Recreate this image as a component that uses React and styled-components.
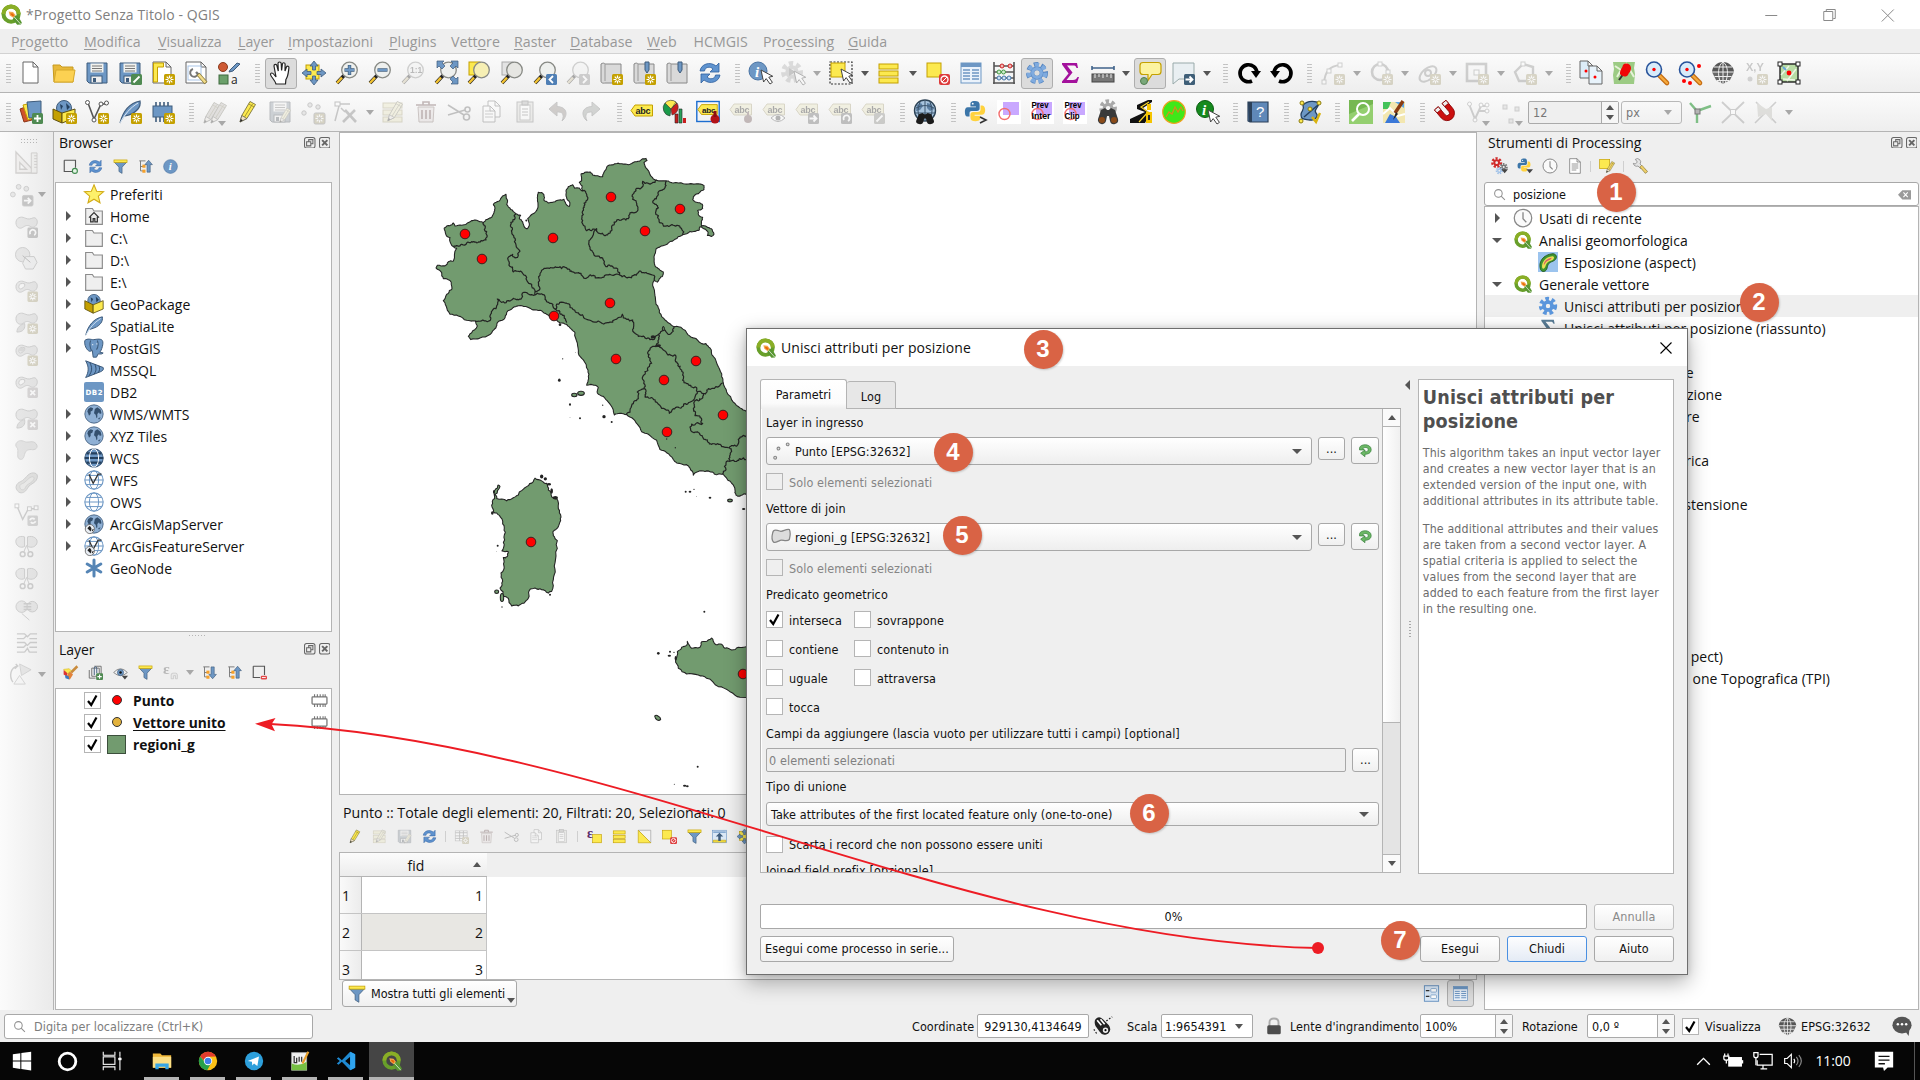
import React from 'react';
import styled, { createGlobalStyle, css } from 'styled-components';

const UI = '"Open Sans", "Noto Sans", sans-serif';
const TAHOMA = '"DejaVu Sans Condensed", "DejaVu Sans", sans-serif';
const LINE = '#b4b4b4';
const BG = '#efefef';

const Global = createGlobalStyle`
  * { box-sizing: border-box; }
  body { margin: 0; background: ${BG}; font-family: ${UI}; font-size: 14px; color: #111; }
`;

/* ---------- shared glyph parts ---------- */
const B = '#6d97c4';
const BD = '#3f5c7c';
const Y = '#fce94f';
const YD = '#c4a000';
const G = '#888a85';

const Star = ({ x = 13, y = 13 }) => (
  <g transform={`translate(${x} ${y})`}>
    <rect width="11" height="11" rx="1.5" fill={YD} />
    <path d="M5.5 1.5v8M1.5 5.5h8M2.7 2.7l5.6 5.6M8.3 2.7L2.7 8.3" stroke="#fff" strokeWidth="1.2" />
    <circle cx="5.5" cy="5.5" r="1.2" fill={YD} />
  </g>
);
const Sq = ({ c = '#5a8c5a', d, x = 13, y = 13 }) => (
  <g transform={`translate(${x} ${y})`}>
    <rect width="11" height="11" rx="1.5" fill={c} />
    <path d={d} stroke="#fff" strokeWidth="1.8" fill="none" />
  </g>
);
const Lens = ({ children, fill = '#eef0ee' }) => (
  <g>
    <path d="M9 14.500l-7 7.500" stroke="#222" strokeWidth="3.600" />
    <path d="M7 16.600l-5 5.400" stroke="#f2c231" strokeWidth="2.400" />
    <circle cx="14.5" cy="9" r="7.8" fill={fill} stroke={G} strokeWidth="1.3" />
    {children}
  </g>
);
const Cursor = ({ x = 10, y = 8 }) => (
  <path transform={`translate(${x} ${y})`} d="M1 1l2.6 12 2.6-3.4 3.8 5.4 2.4-1.6-3.6-5.2 4-.9z" fill="#fff" stroke="#444" strokeWidth="1" />
);
const Pencil = ({ c = Y }) => (
  <g>
    <path d="M4 22l1.800-6.500L14 1.500l5.500 3-8.600 14z" fill={c} stroke="#7a7440" strokeWidth=".9" />
    <path d="M4 22l1.800-6.500 5.100 3z" fill="#f1e2c4" stroke="#555" strokeWidth=".7" />
    <path d="M4 22l.8-3 2 1.300z" fill="#222" />
    <path d="M12.700 4l5.500 3M8.500 17L16.500 4" stroke="#9b8f2a" strokeWidth=".9" />
  </g>
);
const Tag = ({ stroke = YD }) => (
  <g>
    <path d="M1 9.500l4-5.500h17.500v11H5z" fill={Y} stroke={stroke} />
    <text x="5.500" y="12.800" fontSize="9" fontWeight="700" fill="#222" fontFamily="Liberation Sans, sans-serif" textLength="15">abc</text>
  </g>
);
const Globe = ({ fill = '#8fb0d4' }) => (
  <g>
    <circle cx="12" cy="12" r="11" fill={fill} stroke={BD} strokeWidth="1" />
    <path d="M4 9l1-3 3-2 3 1-1 3-2 1v3l-2 2-1-3zM13 6l3-2 4 3 1 4-2 1-1-2-2 2v4l-1 1-1-4-2-2zM17 17l3-1-2 3z" fill="#34506e" />
  </g>
);
const Blob = ({ inner }) => (
  <g>
    <path d="M1 8c0-5 5-7 9-5s6 1 9 0 5 3 4 6-4 5-7 3-5-1-8 1-7 0-7-5z" fill="#ccc" stroke="#888" />
    {inner && <path d="M4 8c0-3 3-4 6-3 1 2-1 4-3 5s-3 0-3-2z" fill="#f4f4f4" stroke="#888" />}
  </g>
);
const Py = () => (
  <g>
    <path d="M12 1c-5 0-5 2-5 4v2h6v1H4c-3 0-3 4-3 5s0 5 3 5h2v-4c0-2 2-2 3-2h5c2 0 3-1 3-3V5c0-3-2-4-5-4z" fill="#3b75a8" />
    <path d="M12.500 23c5 0 5-2 5-4v-2h-6v-1h8c3 0 3.500-3 3.500-5s-1-5-3-5h-2v4c0 2-1 3-3 3H10c-2 0-3 1-3 3v3c0 3 2 4 5.500 4z" fill="#ffd23e" />
    <circle cx="9.500" cy="4" r="1" fill="#fff" />
  </g>
);
const Refresh = () => (
  <g stroke="#2f5f9e" strokeWidth=".8" fill="#5f93cf">
    <path d="M2 10C3 3 12 0 18 5l3-3v9h-9l3-3C12 5 7 6 6.500 10z" />
    <path d="M22 14c-1 7-10 10-16 5l-3 3v-9h9l-3 3c3 3 8 2 8.500-2z" />
  </g>
);
const Funnel = () => (
  <g>
    <path d="M2 5h20l-7.500 8v10l-5-3v-7z" fill={B} stroke={BD} strokeWidth="1" />
    <rect x="1.500" y="1.500" width="21" height="4" fill={Y} stroke={YD} />
  </g>
);
const QLogo = () => (
  <g>
    <circle cx="11.500" cy="11.500" r="8.700" fill="none" stroke="#689f2a" strokeWidth="4.600" />
    <path d="M2.800 11.500a8.700 8.700 0 0 1 17.400 0" fill="none" stroke="#8aae26" strokeWidth="4.600" />
    <path d="M14.500 13.500l4.500-.5 4.800 8-1 2.500-4.300.3-4.800-6z" fill="#589632" />
    <path d="M13 12.500l9.500 10.500" stroke="#fff" strokeWidth=".8" />
    <path d="M8.800 8.600l5 .6 3 3.600-2.800 3-4-2.800z" fill="#f3a64c" />
    <path d="M10.500 10.500l3 .4 1.600 2-1.400 1.500-2.200-1.700z" fill="#e9690c" />
  </g>
);
const Sheet = ({ x = 4, y = 1, w = 15, h = 21, f = '#fff' }) => (
  <path transform={`translate(${x} ${y})`} d={`M0 0h${w - 5}l5 5v${h - 5}H0zM${w - 5} 0v5h5`} fill={f} stroke="#666" strokeWidth="1" />
);
const Cog = ({ c = B, r = 8.500, w = 4, teeth = '4.200 3.150' }) => (
  <g>
    <circle cx="12" cy="12" r={r} fill="none" stroke={c} strokeWidth={w + 1} strokeDasharray={teeth} />
    <circle cx="12" cy="12" r={r - 3.800} fill="none" stroke={c} strokeWidth={w} />
  </g>
);
const Tree = ({ up }) => (
  <g>
    <path d="M2 3h10M4 3v16M4 12h4M4 19h4" stroke="#777" fill="none" strokeWidth="1.500" />
    <rect x="7" y="9" width="5" height="5" fill="#f6a12b" />
    <rect x="7" y="17" width="5" height="5" fill="#f6a12b" />
    <path transform={up ? '' : 'translate(0 24) scale(1 -1)'} d="M17 2l6 7h-3.500v12h-5V9H11z" fill={B} stroke={BD} />
  </g>
);
const Disk = () => (
  <g>
    <path d="M2 2h20v20H4l-2-2z" fill={B} stroke={BD} />
    <rect x="5.500" y="2.500" width="13" height="9" fill="#f2f2ee" />
    <path d="M7 5h10M7 7.500h10M7 10h10" stroke="#777" strokeWidth="1" />
    <rect x="6" y="15" width="11" height="7" fill="#eee" stroke={BD} />
    <rect x="8" y="17" width="3" height="4" fill={BD} />
  </g>
);
const Ruled = () => (
  <g>
    <rect x="2" y="3" width="19" height="5" fill={Y} stroke={YD} />
    <rect x="2" y="10" width="19" height="5" fill={Y} stroke={YD} />
    <rect x="2" y="17" width="19" height="5" fill={Y} stroke={YD} />
  </g>
);
const RevSquare = ({ children }) => (
  <g>
    <rect width="24" height="24" fill="#fff" />
    <rect x="6" y="2" width="16" height="13" fill="#c9a8ff" />
    <circle cx="7.500" cy="14" r="5.500" fill="none" stroke="#f36f6f" strokeWidth="1.400" />
    {children}
  </g>
);
const Binoc = ({ c = '#1b1b1b', e = '#1b1b1b' }) => (
  <g fill={c}>
    <path d="M5 9l4-2 2 2h2l2-2 4 2 3 9a4 4 0 0 1-8 2l-1-5h-2l-1 5a4 4 0 0 1-8-2z" />
    <circle cx="6" cy="19" r="3" fill={e} />
    <circle cx="18" cy="19" r="3" fill={e} />
  </g>
);
const Grid = ({ land, dark }) => (
  <g>
    <circle cx="12" cy="12" r="11" fill={dark ? B : '#fff'} stroke={dark ? BD : B} strokeWidth="1.300" />
    <path d="M1 12h22M3 6.500h18M3 17.500h18" stroke={dark ? '#24405e' : B} strokeWidth={dark ? 2.6 : 1.2} />
    <ellipse cx="12" cy="12" rx="5.500" ry="11" fill="none" stroke={dark ? '#fff' : B} strokeWidth="1.200" />
    {land && <path d="M6 5l5 11 6-11h4" fill="none" stroke="#333" strokeWidth="1.500" />}
  </g>
);
const NetGlobe = () => (
  <g>
    <path d="M12 1C6 1 1 6 1 11h22C23 6 18 1 12 1z" fill="#555" />
    <path d="M1 11l4 8 7 4 7-4 4-8z" fill="#666" />
    <path d="M1 11h22M3 6h18M3.500 15.500h17M6 19.500h12M12 1v22M12 1C7 4 6 14 10 22.500M12 1c5 3 6 13 2 21.500" stroke="#eee" fill="none" strokeWidth="1" />
  </g>
);

const ICONS = {
  qgis: <QLogo />,
  newdoc: <Sheet />,
  open: <g><path d="M1 4h7l2 2h11v15H2z" fill="#e8b93a" stroke="#c79a1e" /><path d="M4 9h19l-2 12H2z" fill="#fcd152" stroke="#d6a92b" /></g>,
  save: <Disk />,
  saveas: <g><Disk /><Sq c="#4f8a52" d="M2.500 8.500l6-6" /></g>,
  newlayout: <g><Sheet x={2} y={1} w={18} h={21} /><path d="M2.500 2h10v4h-6v15h-4z" fill={Y} stroke={YD} /><Star /></g>,
  layouts: <g><Sheet x={2} y={1} w={20} h={21} /><rect x="4" y="5" width="13" height="14" fill="none" stroke="#a9c5e8" /><path d="M9 8a4 4 0 1 0 5 5" stroke="#777" strokeWidth="2" fill="none" /><path d="M12 11l3 3" stroke="#777" strokeWidth="2.400" /><path d="M14 13l8 9" stroke="#8a7a3a" strokeWidth="4" /><path d="M14.500 13.500l7 8" stroke="#f2dc8a" strokeWidth="2.600" /></g>,
  style: <g><circle cx="6" cy="6" r="4.500" fill="#ce5a34" stroke="#8a3a1e" /><path d="M13 9l7-7 3 1-7 7-4 1z" fill={B} stroke={BD} /><rect x="2" y="14" width="9" height="9" fill="#6ba06b" stroke="#3f6b3f" /><text x="14" y="22.500" fontSize="12" fontFamily="Open Sans, sans-serif" fill="#222">a</text></g>,
  hand: <path d="M7 23c-1-4-5-7-5.500-9.500 0-2 2-2 3.500 0l2 2.500-2-11c0-2 2.600-2.200 3 0L9.300 10 9 2.500c0-2 3-2 3.200 0l.4 7L13.400 3c.3-1.800 2.800-1.600 2.700.3L16 10l1.400-4c.8-1.600 3-.8 2.500 1-.6 4-.6 8-3 11.500L16.500 23z" fill="#fff" stroke="#222" strokeWidth="1.200" />,
  pansel: <g><rect x="4" y="4" width="13" height="14" fill={Y} stroke={YD} /><g fill={B} stroke={BD} strokeWidth=".8"><path d="M12 0l4 5h-2.500v4h-3V5H8z" /><path d="M12 24l4-5h-2.500v-4h-3v4H8z" /><path d="M0 12l5-4v2.500h4v3H5V16z" /><path d="M24 12l-5-4v2.500h-4v3h4V16z" /></g></g>,
  zoomin: <Lens><path d="M14.500 4v10M9.500 9h10" stroke={BD} strokeWidth="3.400" /><path d="M14.500 4.500v9M10 9h9" stroke={B} strokeWidth="2" /></Lens>,
  zoomout: <Lens><path d="M9.500 9h10" stroke={BD} strokeWidth="3.400" /><path d="M10 9h9" stroke={B} strokeWidth="2" /></Lens>,
  zoom11: <Lens><text x="9" y="12" fontSize="8.500" fontWeight="700" fill="#555" fontFamily="Liberation Sans, sans-serif">1:1</text></Lens>,
  zoomfull: <g><Lens /><g fill={B} stroke={BD} strokeWidth=".7"><path d="M3 0h7L8 2l3 3-3 3-3-3-2 2z" /><path d="M24 0h-7l2 2-3 3 3 3 3-3 2 2z" /><path d="M24 23h-7l2-2-3-3 3-3 3 3 2-2z" /></g></g>,
  zoomsel: <g><rect x="2" y="1" width="11" height="13" fill={Y} stroke={YD} /><Lens fill="#f6efb4" /></g>,
  zoomlayer: <g><rect x="2" y="1" width="11" height="13" fill="#e3e3e3" stroke="#aaa" /><Lens fill="#e6e6e2" /></g>,
  zoomlast: <g><Lens /><Sq c="#4f7fb5" d="M7 2L3.500 5.500 7 9" /></g>,
  zoomnext: <g><Lens /><Sq c="#888" d="M4 2l3.500 3.500L4 9" /></g>,
  book: <g><path d="M2 3c3-2 4 0 4 0h16v19H6s-4 1-4-2z" fill="#d9d9d9" stroke="#888" /><path d="M6 3v17" stroke="#999" /><path d="M13 1h4v8l-2 3-2-3z" fill={B} stroke={BD} /></g>,
  booknew: <g><path d="M2 3c3-2 4 0 4 0h16v19H6s-4 1-4-2z" fill="#d9d9d9" stroke="#888" /><path d="M6 3v17" stroke="#999" /><Star /></g>,
  bookadd: <g><path d="M2 3c3-2 4 0 4 0h16v19H6s-4 1-4-2z" fill="#d9d9d9" stroke="#888" /><path d="M6 3v17" stroke="#999" /><path d="M13 1h4v8l-2 3-2-3z" fill={B} stroke={BD} /><Star /></g>,
  refresh: <Refresh />,
  identify: <g><circle cx="10" cy="10" r="9" fill={B} stroke="#4a74a4" /><text x="7" y="15.500" fontSize="15" fontWeight="700" fontStyle="italic" fontFamily="Liberation Serif, serif" fill="#fff">i</text><Cursor x={12} y={8} /></g>,
  info: <g><circle cx="12" cy="12" r="11" fill={B} stroke="#4a74a4" /><text x="9" y="18" fontSize="17" fontStyle="italic" fontWeight="700" fontFamily="Liberation Serif, serif" fill="#fff">i</text></g>,
  action: <g><g transform="translate(-1 -1)"><Cog c="#aaa" /></g><path d="M8 7l7 4-7 4z" fill="#777" /><Cursor x={12} y={9} /></g>,
  select: <g><rect x="1" y="1" width="22" height="22" fill="none" stroke="#333" strokeWidth="1.200" strokeDasharray="2 1.500" /><rect x="2" y="2" width="14" height="14" fill={Y} stroke={YD} /><Cursor x={11} y={7} /></g>,
  rows: <Ruled />,
  deselect: <g><rect x="1" y="2" width="14" height="14" fill={Y} stroke={YD} /><rect x="13" y="13" width="11" height="11" rx="2" fill="#dd3b3b" /><circle cx="18.500" cy="18.500" r="3.500" fill="none" stroke="#fff" strokeWidth="1.300" /><path d="M16 21l5-5" stroke="#fff" /></g>,
  table: <g><rect x="2" y="2" width="20" height="20" fill="#eaf2fb" stroke={B} /><rect x="2" y="2" width="20" height="4" fill={B} /><path d="M4 9h7M4 12h7M4 15h7M4 18h7M13 9h7M13 12h7M13 15h7M13 18h7" stroke={B} strokeWidth="1.400" /></g>,
  abacus: <g><path d="M2 1v22M22 1v22M1 22h22M2 5h20M2 11h20M2 17h20" stroke="#555" strokeWidth="1.600" /><g strokeWidth="1"><g fill="#f4b6b6" stroke="#c22"><circle cx="10" cy="5" r="2" /><circle cx="18" cy="5" r="2" /></g><g fill="#cdeccd" stroke="#494"><circle cx="7" cy="11" r="2" /><circle cx="11.500" cy="11" r="2" /></g><g fill="#cfe0f4" stroke="#47a"><circle cx="7" cy="17" r="2" /><circle cx="12" cy="17" r="2" /><circle cx="17" cy="17" r="2" /></g></g></g>,
  cog: <g><Cog c="#5585c0" /><Cog c="#7fabdf" r={8.300} w={3} /></g>,
  cogb: <g><Cog c="#5b96dc" /><circle cx="12" cy="12" r="5" fill="none" stroke="#5b96dc" strokeWidth="4" /></g>,
  sigma: <path d="M4 2h15l1 5h-1.500c-.5-2-1.500-2.500-3.500-2.500H9l5.500 7L8.500 19H15c2.500 0 3.500-1 4.500-3H21l-2 6H4v-1.500l6.500-8L4 3.500z" fill="#a3119c" />,
  sigmablue: <path d="M4 2h15l1 5h-1.500c-.5-2-1.500-2.500-3.500-2.500H9l5.500 7L8.500 19H15c2.500 0 3.500-1 4.500-3H21l-2 6H4v-1.500l6.500-8L4 3.500z" fill="#5a7d96" />,
  ruler: <g><path d="M1 7h22M1 5v4M23 5v4" stroke="#40638a" strokeWidth="1.600" /><rect x="1" y="13" width="22" height="8" fill="#777" stroke="#444" /><path d="M4 13v4M8 13v3M12 13v4M16 13v3M20 13v4" stroke="#eee" /></g>,
  tips: <g><path d="M5 1.500h15q3 0 3 3v6q0 3-3 3h-6l-4 6v-6H5q-3 0-3-3v-6q0-3 3-3z" fill="#fcf3a0" stroke={YD} strokeWidth="1.200" /><circle cx="6" cy="20" r="3.500" fill="#7aa87a" stroke="#4f7d4f" /></g>,
  annot: <g><path d="M2 2h21v16H8l-6 5z" fill="#e9eff2" stroke="#9aa" /><Sq c="#3f5f78" d="M1.500 5.500h7M5.500 2.500l3 3-3 3" /></g>,
  cw: <g><path d="M15 20A8.500 8.500 0 1 1 20 12" fill="none" stroke="#000" strokeWidth="3.600" /><path d="M14 10h10l-5 7z" fill="#000" /></g>,
  ccw: <g><path d="M9 20A8.500 8.500 0 1 0 4 12" fill="none" stroke="#000" strokeWidth="3.600" /><path d="M10 10H0l5 7z" fill="#000" /></g>,
  arc: <g><path d="M3 22C4 10 9 5 19 4" fill="none" stroke={G} strokeWidth="2" /><g fill="#fff" stroke={G}><rect x="1" y="19" width="4" height="4" /><rect x="6" y="8" width="4" height="4" /><rect x="17" y="2" width="4" height="4" /></g><Star /></g>,
  circ: <g><circle cx="11" cy="11" r="8" fill="none" stroke={G} strokeWidth="2.600" /><g fill="#fff" stroke={G}><rect x="9" y="1" width="4" height="4" /><rect x="17" y="9" width="4" height="4" /></g><Star /></g>,
  ell: <g><ellipse cx="11" cy="13" rx="10" ry="5.500" transform="rotate(-40 11 13)" fill="none" stroke={G} strokeWidth="2" /><circle cx="11" cy="12" r="3" fill="none" stroke={G} strokeWidth="2" /><Star /></g>,
  rect: <g><rect x="2" y="3" width="19" height="17" fill="none" stroke={G} strokeWidth="2.600" /><rect x="9" y="9" width="5" height="5" fill="#fff" stroke={G} /><Star /></g>,
  poly: <g><path d="M2 11L10 3l10 3v9l-6 5H6z" fill="none" stroke={G} strokeWidth="2.400" /><rect x="8" y="1" width="4" height="4" fill="#fff" stroke={G} /><Star /></g>,
  copymap: <g><Sheet x={1} y={0} w={13} h={17} f="#dcecf8" /><Sheet x={10} y={5} w={13} h={18} f="#e8f3fb" /><circle cx="7" cy="10" r="1.500" fill="red" /><circle cx="16" cy="16" r="1.500" fill="red" /></g>,
  pinmap: <g><path d="M1 1h22l-1 6 1 6-1 10H2l-1-9 1-6z" fill="#9ccb84" /><path d="M3 5l6 4-4 7M14 2l8 14" stroke="#e6f2d8" strokeWidth="2" fill="none" /><path d="M12 12l-5 7" stroke="#333" strokeWidth="2" /><path d="M11 4c3-3 8-1 8 3s-2 4-3 7c-3 3-6 1-8-1 0-5 2-5 3-9z" fill="#f00606" /></g>,
  lensdot: <g><path d="M14 14l8 8" stroke="#c46a10" strokeWidth="4.600" strokeLinecap="round" /><path d="M14 14l8 8" stroke="#f5a93c" strokeWidth="2.400" strokeLinecap="round" /><circle cx="9" cy="8.500" r="7.500" fill="#d7ebfa" stroke="#27529a" strokeWidth="1.600" /><circle cx="9" cy="8.500" r="1.700" fill="red" /></g>,
  lensdots: <g><path d="M14 14l8 8" stroke="#c46a10" strokeWidth="4.600" strokeLinecap="round" /><path d="M14 14l8 8" stroke="#f5a93c" strokeWidth="2.400" strokeLinecap="round" /><circle cx="9" cy="8.500" r="7.500" fill="#d7ebfa" stroke="#27529a" strokeWidth="1.600" /><g fill="red"><circle cx="9" cy="8.500" r="1.700" /><circle cx="21" cy="5" r="2" /><circle cx="6" cy="20" r="2" /><circle cx="12" cy="22" r="2" /></g></g>,
  netglobe: <NetGlobe />,
  xy: <g><text x="2" y="10" fontSize="11" fontWeight="700" fontFamily="Liberation Sans, sans-serif" fill="#777">X,Y</text><circle cx="6" cy="18" r="2.500" fill="#999" /><Star /></g>,
  maparea: <g><rect x="3" y="3" width="18" height="18" fill="#b8dca4" stroke="#222" strokeWidth="1.400" /><path d="M4 14l8-9M10 20l9-12M6 18l12 1" stroke="#eef6e6" strokeWidth="1.500" /><path d="M6 6l3 3" stroke="#6aa6d8" strokeWidth="2" /><circle cx="12" cy="12" r="2.400" fill="red" /><g fill="#fff" stroke="#222"><rect x="1" y="1" width="4" height="4" /><rect x="19" y="1" width="4" height="4" /><rect x="1" y="19" width="4" height="4" /><rect x="19" y="19" width="4" height="4" /></g></g>,
  /* second toolbar */
  dsm: <g><path d="M1 9l8-3 4 14-8 2z" fill="#d0532b" stroke="#8c3417" /><path d="M4 5l9-2 4 14-8 3z" fill={Y} stroke={YD} /><path d="M8 2l14-1v16l-12 1z" fill={B} stroke={BD} /><Sq c="#4f8a52" d="M5.500 2v7M2 5.500h7" /></g>,
  gpkgnew: <g><circle cx="12" cy="8" r="7.500" fill={B} stroke={BD} /><path d="M8 4l3 2-2 4zM14 3l4 4-3 3z" fill="#24405e" /><path d="M1 9l9 4v10l-9-4z" fill={YD} stroke="#5e5010" /><path d="M10 13l13-4v9l-13 5z" fill={Y} stroke="#5e5010" /><Star x={14} y={13} /></g>,
  vnew: <g><path d="M3 3l6 16L16 4h6" fill="none" stroke="#555" strokeWidth="1.600" /><g fill="#fff" stroke="#555"><circle cx="2.500" cy="2.500" r="2" /><circle cx="9" cy="20" r="2" /><circle cx="16" cy="4" r="2" /><circle cx="21.500" cy="3" r="2" /></g><Star /></g>,
  feather: <g><path d="M2 23C5 11 12 3 22 1c1 5-2 12-15 15" fill={B} stroke={BD} strokeWidth="1.200" /><path d="M2 23C7 14 12 8 20 3" stroke="#dfeaf6" fill="none" /></g>,
  feathernew: <g><path d="M2 23C5 11 12 3 22 1c1 5-2 12-15 15" fill={B} stroke={BD} strokeWidth="1.200" /><path d="M2 23C7 14 12 8 20 3" stroke="#dfeaf6" fill="none" /><Star /></g>,
  chipnew: <g><path d="M5 2v20M9 2v20M13 2v20M17 2v20" stroke="#3f5c7c" strokeWidth="1.600" /><rect x="2" y="6" width="19" height="11" fill={B} stroke={BD} /><Star /></g>,
  pencils: <g><g transform="translate(-3 0)"><Pencil c="#c9b8a8" /></g><g transform="translate(4 0)"><Pencil c="#c9b8a8" /></g></g>,
  pencil: <g transform="translate(1 0)"><Pencil /></g>,
  savep: <g><Disk /><g transform="translate(9 7) scale(.7)"><Pencil /></g></g>,
  ptsnew: <g fill="#ccc" stroke="#777"><circle cx="3" cy="13" r="2.200" /><circle cx="9" cy="5" r="2.200" /><circle cx="17" cy="7" r="2.200" /><Star /></g>,
  vtools: <g><path d="M2 4h14M5 6L1 21M7 8l4 4" stroke="#777" strokeWidth="1.500" fill="none" /><rect x="1" y="2" width="5" height="4" fill="#fff" stroke="#666" /><path d="M11 10l11 12M21 10L9 22" stroke="#777" strokeWidth="2.600" /></g>,
  multi: <g><Ruled /><g transform="translate(3 0) scale(.95)"><Pencil /></g></g>,
  trash: <g><path d="M4 7h16l-1 15H5z" fill="#f0d4d4" stroke="#a65" /><path d="M2 5h20M9 5V2h6v3M8 10v9M12 10v9M16 10v9" stroke="#a33" strokeWidth="1.600" fill="none" /></g>,
  cut: <g stroke="#666" strokeWidth="1.600" fill="none"><path d="M1 5l16 10M1 15L18 10" /><circle cx="19.500" cy="17" r="3" /><circle cx="20.500" cy="9.500" r="2.500" /></g>,
  copy: <g><Sheet x={8} y={1} w={12} h={16} /><Sheet x={3} y={6} w={12} h={16} /><path d="M5 11h6M5 14h8M5 17h8" stroke="#888" /></g>,
  paste: <g><rect x="4" y="2" width="16" height="20" fill="#ddd9c8" stroke="#777" /><rect x="7" y="5" width="10" height="15" fill="#fff" stroke="#888" /><rect x="9" y="1" width="6" height="4" fill="#aaa" stroke="#666" /><path d="M9 9h6M9 12h6M9 15h6" stroke="#777" /></g>,
  undo: <path d="M11 2L3 9l8 7v-4c5-.5 8 2 5 9 6-5 6-14-5-14.500z" fill="#a4826e" stroke="#777" />,
  redo: <path d="M13 2l8 7-8 7v-4c-5-.5-8 2-5 9-6-5-6-14 5-14.500z" fill="#8a9e8a" stroke="#777" />,
  tag: <g transform="translate(0 1)"><Tag /></g>,
  diagram: <g><path d="M8 9V1a8 8 0 0 1 6 2z" fill={Y} stroke="#333" strokeWidth=".6" /><path d="M8 9L2 3a8 8 0 0 0 5 13z" fill="#1a9a49" stroke="#333" strokeWidth=".6" /><path d="M8 9l6-6a8 8 0 0 1-5 12z" fill="#c81e1e" stroke="#333" strokeWidth=".6" /><path d="M8 9L2 3a8 8 0 0 1 11-1z" fill={Y} stroke="#333" strokeWidth=".6" /><path d="M12 14h3v9h-3z" fill="#c81e1e" stroke="#222" strokeWidth=".6" /><path d="M16 9h3v14h-3z" fill="#2aa05a" stroke="#222" strokeWidth=".6" /><path d="M20 18h3v5h-3z" fill="#c81e1e" /></g>,
  tagpin: <g><rect x=".8" y="1.500" width="22.400" height="20" fill="none" stroke="#1c6dd0" strokeWidth="1.400" /><g transform="translate(1 1) scale(.9)"><Tag /></g><circle cx="19" cy="19" r="4.500" fill="#b31217" /><path d="M19 11v6" stroke="#8c0d12" strokeWidth="3" /></g>,
  tagpin2: <g><Tag /><circle cx="19" cy="19" r="4" fill="#a44" /><path d="M19 12v6" stroke="#a44" strokeWidth="2" /></g>,
  tageye: <g><Tag /><path d="M9 18q7-7 14 0-7 7-14 0z" fill="#fff" stroke="#555" /><circle cx="16" cy="18" r="2.500" fill="#444" /></g>,
  tagmove: <g><Tag /><Sq c="#666" d="M1.500 5.500h7M5.500 2.500l3 3-3 3" /></g>,
  tagrot: <g><Tag /><Sq c="#666" d="M3 7a3 3 0 1 1 4 1" /></g>,
  tagedit: <g><Tag /><Sq c="#888870" d="M2.500 8.500l6-6" /></g>,
  meta: <g><circle cx="12" cy="10.500" r="10.500" fill="#a8c4de" stroke="#2d4356" strokeWidth="1.400" /><path d="M4 5l4-2 2 3-3 4-4 1zM14 3l4 1 3 5-4 2-3-3z" fill="#5b7fa3" /><path d="M3 8q9-5 18 0M2 13h20M12 1v20M7 2q-4 9 0 17M17 2q4 9 0 17" stroke="#3d566e" fill="none" /><g transform="translate(1.500 8) scale(.88 .7)"><Binoc /></g></g>,
  python: <g><g transform="scale(.92)"><Py /></g><path d="M16 17l6 3-6 3" stroke="#333" fill="none" strokeWidth="1.600" /></g>,
  shapes: <RevSquare />,
  previnter: <RevSquare><text x="1.500" y="8" fontSize="9.500" fontWeight="700" fontFamily="Liberation Sans, sans-serif" textLength="17" lengthAdjust="spacingAndGlyphs">Prev</text><text x="1.500" y="18.500" fontSize="9.500" fontWeight="700" fontFamily="Liberation Sans, sans-serif" textLength="19" lengthAdjust="spacingAndGlyphs">Inter</text></RevSquare>,
  prevclip: <RevSquare><text x="1.500" y="8" fontSize="9.500" fontWeight="700" fontFamily="Liberation Sans, sans-serif" textLength="17" lengthAdjust="spacingAndGlyphs">Prev</text><text x="1.500" y="18.500" fontSize="9.500" fontWeight="700" fontFamily="Liberation Sans, sans-serif" textLength="15" lengthAdjust="spacingAndGlyphs">Clip</text></RevSquare>,
  binoc: <g><g transform="translate(2.500 -1.500) scale(.8)"><Cog c="#a8a8a8" /></g><g transform="translate(0 1)"><Binoc c="#3a3a3a" e="#8a4a18" /></g></g>,
  road: <g><path d="M19 0L8 5v4l8 3L1 19v4h15l5-10-7-5 9-6V0z" fill="#111" /><path d="M20 2l-8 5 7 5-9 10" stroke="#f7d62e" fill="none" strokeWidth="1.200" /><path d="M17 12h6v11h-6zM18 4h4v6h-4z" fill="#f5c400" /><path d="M20 15v5" stroke="#222" strokeWidth="2" /></g>,
  wave: <g><circle cx="12" cy="12" r="11.300" fill="#3fe819" stroke="#f0a020" strokeWidth="1.200" /><path d="M4 17l3-5 3 2 3-7 3 5 3-5 2 4" stroke="#d2911e" fill="none" strokeWidth="1.300" /></g>,
  greeninfo: <g><circle cx="10" cy="9" r="8.500" fill="#168a1e" stroke="#0c5f12" /><text x="7" y="14.500" fontSize="15" fontWeight="700" fontStyle="italic" fontFamily="Liberation Serif, serif" fill="#fff">i</text><Cursor x={12} y={9} /></g>,
  help: <g><path d="M2 2h20v20H4l-2-1z" fill="#5f88b8" stroke="#2c415a" strokeWidth="1.200" /><path d="M2 2h4v20H3z" fill="#2c415a" /><text x="10" y="17" fontSize="15" fontFamily="Liberation Sans, sans-serif" fill="#fff">?</text></g>,
  digit: <g><path d="M5 5c5-5 13-4 16-2-1 6-6 7-3 10s-1 8-6 7-9 0-9-5 4-4 2-10z" fill={B} stroke="#24405e" strokeWidth="1.300" /><path d="M6 17L20 5" stroke="#24405e" strokeWidth="1.500" /><g fill={Y} stroke="#8a7a10"><circle cx="4" cy="3" r="2" /><circle cx="21" cy="3" r="2" /><circle cx="12" cy="9" r="2" /><circle cx="3" cy="21" r="2" /></g><path d="M14 17l4 5 4-9" stroke="#d9b310" strokeWidth="2.400" fill="none" /></g>,
  qms: <g><rect width="24" height="24" fill="#76b852" /><path d="M0 14L24 4v20H0z" fill="#94cf70" /><circle cx="14" cy="9" r="6" fill="none" stroke="#fff" strokeWidth="2" /><path d="M10 14l-7 7" stroke="#fff" strokeWidth="2.600" /></g>,
  mapbrush: <g><rect x="1" y="2" width="22" height="21" fill="#f3e7b0" /><path d="M1 2h8l-3 7H1z" fill="#44c35a" /><path d="M13 2h9v6z" fill="#5ba7e8" /><path d="M3 23l5-9 6 3 4 6z" fill="#3b78d8" /><path d="M1 14l7-6 8 8 7-2" stroke="#fff" strokeWidth="2" fill="none" /><path d="M21 1l-8 12" stroke="#8b3d12" strokeWidth="3.400" /><path d="M14 12l-3 8 5-6z" fill="#222" /></g>,
  magnet: <g transform="rotate(-40 12 12)"><path d="M4.500 3v10.500a7.500 7.500 0 0 0 15 0V3h-5v10.500a2.500 2.500 0 0 1-5 0V3z" fill="#cc1010" stroke="#800" strokeWidth=".8" /><path d="M4.500 3v4h5V3zM14.500 3v4h5V3z" fill="#eee" stroke="#800" strokeWidth=".8" /></g>,
  snapv: <g><path d="M2 3l6 15L14 5M12 5h9M12 10h9" fill="none" stroke="#888" strokeWidth="2" /><g fill="#fff" stroke="#888"><circle cx="2.500" cy="3" r="2" /><circle cx="14" cy="4" r="2" /><circle cx="8" cy="19" r="2" /><circle cx="20" cy="4" r="2" /><circle cx="20" cy="10" r="2" /></g></g>,
  snapp: <g fill="#ccc" stroke="#888"><rect x="3" y="4" width="4" height="4" /><rect x="15" y="6" width="4" height="4" /><rect x="9" y="18" width="4" height="4" /></g>,
  topo: <g><path d="M2 3l7 8 14-5M9 11v12" stroke="#7fbf86" strokeWidth="2.400" fill="none" /><rect x="7" y="9" width="5" height="5" fill="#b6b6b6" stroke="#777" /></g>,
  xcross: <g><path d="M1 2l22 21M23 2L1 23" stroke="#888" strokeWidth="1.800" /><rect x="9.500" y="9.500" width="5" height="5" fill="#fff" stroke="#888" /></g>,
  trace: <g><path d="M1 23L22 2M2 2l20 21" stroke="#888" strokeWidth="1.600" /><path d="M3 3l9 6 6-2v14l-6-7-8 3z" fill="#bdb89a" /></g>,
  /* advanced digitizing column */
  cad: <g><path fillRule="evenodd" d="M1 1l21 22H1zM5 12v7h7z" fill="#f0e0d6" stroke="#a09080" strokeWidth="1.400" /><path d="M17 2h6v21h-6z" fill="#e8e6da" stroke="#a09080" /><path d="M20 5h3M20 8h3M20 11h3M20 14h3M20 17h3" stroke="#a09080" /></g>,
  mvpts: <g fill="#ccc" stroke="#888"><circle cx="3" cy="12" r="2.500" /><circle cx="9" cy="4" r="2.500" /><circle cx="17" cy="6" r="2.500" /><Sq c="#777" d="M1.500 5.500h7M5.500 2.500l3 3-3 3" /></g>,
  rotf: <g><Blob /><Sq c="#777" d="M3 7a3 3 0 1 1 4 1" /></g>,
  simp: <g><circle cx="8" cy="8" r="7.500" fill="#ccc" stroke="#888" /><path d="M11 10h9l3 6-4 7h-8l-3-6z" fill="#dfe3e8" stroke="#888" /><path d="M8 9l8 7" stroke="#555" /></g>,
  ring: <g><Blob inner /><Star /></g>,
  part: <g><Blob /><path d="M2 22c0-5 4-8 8-9 1 5-1 9-8 9z" fill="#bbb" stroke="#888" /><Star /></g>,
  fillring: <g><Blob inner /><ellipse cx="7" cy="7" rx="3" ry="2" fill="#aaa" /><Star /></g>,
  delring: <g><Blob inner /><Sq c="#b09aa0" d="M3 3l5 5M8 3L3 8" /></g>,
  delpart: <g><Blob /><path d="M2 22c0-5 4-8 8-9 1 5-1 9-8 9z" fill="#bbb" stroke="#888" /><Sq c="#b09aa0" d="M3 3l5 5M8 3L3 8" /></g>,
  reshape: <g><path d="M1 5c3-5 7-3 10-2s8-2 11 2-1 7-5 6c-4 0-6 1-7 5s-2 6-5 5-2-5-2-9-3-3-2-7z" fill="#c4c4c4" stroke="#999" /></g>,
  offset: <g><path d="M4 22c-5-4-3-9 2-11S13 2 19 2s5 6 2 9-6 3-8 7-6 6-9 4z" fill="#bdbdb4" stroke="#888" /><path d="M6 19c-2-3-1-5 2-6s7-7 10-7 2 3 0 5-6 3-7 6-3 3-5 2z" fill="#d5d5cc" stroke="#999" /></g>,
  vref: <g><path d="M2 3l6 14 6-11h8" stroke="#888" fill="none" strokeWidth="1.500" /><g fill="#fff" stroke="#888"><rect x="0" y="1" width="4" height="4" /><rect x="13" y="4" width="4" height="4" /><rect x="20" y="3" width="4" height="4" /></g><Sq c="#999" d="M2.500 5a3 3 0 0 1 5-1M8.500 6a3 3 0 0 1-5 1" /></g>,
  split: <g fill="#ccc" stroke="#888"><path d="M10 2C4 0 0 4 1 8s5 6 9 4zM13 2c6-2 11 2 10 6s-5 6-10 4z" /><circle cx="8" cy="20" r="2.500" fill="none" strokeWidth="1.600" /><circle cx="16" cy="20" r="2.500" fill="none" strokeWidth="1.600" /><path d="M9 18l3-7M15 18l-3-7" /></g>,
  merge: <g fill="#ccc" stroke="#888"><circle cx="7" cy="8" r="6" /><circle cx="18" cy="8" r="5.500" /><path d="M9 5h8M9 8h8M9 11h8" strokeWidth="1.600" /><path d="M7 15l8 7" /></g>,
  mergeattr: <g stroke="#888" fill="none" strokeWidth="1.400"><path d="M2 3h8l3 3 3-3h7M2 8h7l3-3M2 12h8l3 3 3-3h7M2 17h7l3-3M2 22h8M15 22h8M15 8h8M15 17h8M10 22l3-4 2 4" /></g>,
  rotsym: <g><path d="M3 20C-1 14 0 5 8 3l-2-2M8 3L5 6" stroke="#888" fill="none" strokeWidth="1.500" /><path d="M10 1l12 6-10 6z" fill="#ccc" stroke="#999" /><path d="M10 13l6 9H4z" fill="#f4f4f4" stroke="#999" /></g>,
  /* docks */
  addlayer: <g><path d="M2 2h18v12M15 20H2V2" fill="none" stroke="#555" strokeWidth="1.800" /><circle cx="19" cy="19" r="4" fill="#e6f4e6" stroke="#3f8a4d" strokeWidth="1.800" /></g>,
  funnel: <Funnel />,
  treeup: <Tree up />,
  treedown: <Tree />,
  brush: <g><path d="M23 2L13 12" stroke="#c98b3c" strokeWidth="4" /><path d="M10 9l6 6-5 8-6-3z" fill="#e2823a" /><path d="M1 7l9-1 3 3-6 5z" fill={Y} stroke="#d8b820" /><path d="M1 8l6 5-1 5-5-3z" fill="#d33" /><path d="M3 16l6 2 1 5-6-2z" fill="#3a78c2" /></g>,
  addgroup: <g><path d="M2 8v13h10M6 5v13h12V5zM10 2v0h11v13" fill="none" stroke="#777" strokeWidth="1.600" /><path d="M10 16V5a2 2 0 0 1 4 0v8" fill="none" stroke={BD} strokeWidth="1.500" /><Sq c="#4f8a52" d="M5.500 2v7M2 5.500h7" /></g>,
  eye: <g><path d="M1 12Q12 0 23 12 12 22 1 12z" fill="#f3f3f3" stroke="#888" strokeWidth="1.500" /><circle cx="12" cy="12" r="5" fill={B} stroke={BD} /><circle cx="12" cy="12" r="2" fill="#111" /><path d="M14 17h10l-5 6z" fill="#444" /></g>,
  eps: <g><text x="0" y="15" fontSize="25" fontWeight="700" fontFamily="Liberation Serif, serif" fill="#555">ε</text><path d="M13 22v-6q0-3 3-3h4q3 0 3 3v6h-3v-5h-3v5z" fill="#ddd" stroke="#666" /></g>,
  dellayer: <g><path d="M2 2h18v14M13 20H2V2" fill="none" stroke="#555" strokeWidth="1.800" /><rect x="14" y="17" width="10" height="6" rx="2" fill="#e24a4a" /><path d="M16 20h6" stroke="#fff" strokeWidth="1.400" /></g>,
  star: <path d="M12 1l3.200 7.600 8.300.6-6.300 5.400 2 8L12 18.300 4.800 22.600l2-8L.5 9.200l8.300-.6z" fill="#fdf06a" stroke="#d2ab18" strokeWidth="1.300" />,
  folder: <path d="M2 3h8l2 3h10v16H2z" fill="#efefef" stroke="#8c8c8c" strokeWidth="1.400" />,
  home: <g><path d="M2 3h8l2 3h10v16H2z" fill="#efefef" stroke="#8c8c8c" strokeWidth="1.400" /><path d="M6 14l6-6 6 6M8 13v6h3v-4h2v4h3v-6" fill="none" stroke="#333" strokeWidth="1.500" /></g>,
  gpkg: <g><circle cx="12" cy="8" r="7.500" fill={B} stroke={BD} /><path d="M8 4l3 2-2 4zM14 3l4 4-3 3z" fill="#24405e" /><path d="M1 8l10 5v10L1 18z" fill={YD} stroke="#5e5010" /><path d="M11 13l12-5v10l-12 5z" fill={Y} stroke="#5e5010" /></g>,
  pg: <g><path d="M1 3c3-3 8-1 10-1s9-2 11 1-1 12-3 14l4 1c-2 2-5 1-6 1l-2 4h-4l-1-8-3 1C3 15 0 8 1 3z" fill={B} stroke={BD} strokeWidth="1.200" /><path d="M8 3c-2 5-1 8 1 12M16 3c2 5 1 8-1 11" stroke={BD} fill="none" strokeWidth="1.300" /><path d="M10 8h1M15 7h1" stroke="#fff" strokeWidth="1.500" /></g>,
  mssql: <g><path d="M2 1l21 8c1 3-1 4-3 5L2 21c4-7 4-13 0-20z" fill={B} stroke={BD} strokeWidth="1.200" /><path d="M7 3c3 6 3 10-1 16M13 5c2 5 2 8-1 12M18 7c1 3 1 6-1 8" stroke="#24405e" fill="none" /></g>,
  db2: <g><rect width="24" height="24" rx="2.500" fill={B} /><text x="1.800" y="15" fontSize="8.500" fontWeight="700" fontFamily="DejaVu Sans, sans-serif" fill="#fff" textLength="20.500">DB2</text></g>,
  globe: <Globe />,
  wcs: <Grid dark />,
  wfs: <Grid land />,
  ows: <Grid />,
  arcmap: <g><Globe /><circle cx="7" cy="18" r="5.500" fill="#e9eef4" stroke="#666" /><path d="M4 17l3-3 2 3-1 4zM9 19l3-1-2 3z" fill="#222" /></g>,
  arcfeat: <g><Grid land /><circle cx="7" cy="18" r="5.500" fill="#e9eef4" stroke="#666" /><path d="M4 17l3-3 2 3-1 4zM9 19l3-1-2 3z" fill="#222" /></g>,
  geonode: <g stroke="#5585b5" strokeWidth="3.600" strokeLinecap="round"><path d="M12 2.500v19M3.800 7.200l16.400 9.600M20.200 7.200L3.800 16.800" /><circle cx="12" cy="12" r="2.500" fill="#5585b5" stroke="none" /></g>,
  memchip: <g><path d="M5 3v18M9 3v18M13 3v18M17 3v18M20 3v18" stroke="#777" strokeWidth="1.600" strokeDasharray="4 10" /><rect x="1.500" y="7" width="21" height="10" rx="1" fill="#fff" stroke="#777" strokeWidth="1.800" /></g>,
  clock: <g><circle cx="12" cy="12" r="10.500" fill="#fafafa" stroke="#888" strokeWidth="1.500" /><path d="M12 5v8l4 4" fill="none" stroke="#888" strokeWidth="1.600" /></g>,
  doc: <g><Sheet x={4} y={1} w={16} h={22} /><path d="M7 9h10M7 12h10M7 15h10M7 18h7" stroke="#888" strokeWidth="1.300" /></g>,
  gears: <g><g transform="translate(-2 -2) scale(.75)"><Cog c="#d02a2a" /></g><g transform="translate(11 7) scale(.55)"><Cog c="#777" /></g><g transform="translate(5 13) scale(.5)"><Cog c="#9ec0e8" /></g><path d="M14 17h10l-5 6z" fill="#444" /></g>,
  pydrop: <g><g transform="scale(.88)"><Py /></g><path d="M14 17h10l-5 6z" fill="#444" /></g>,
  editnote: <g><rect x="1" y="2" width="15" height="14" fill={Y} stroke={YD} /><g transform="translate(8 4) scale(.8)"><Pencil c="#f2d36a" /></g></g>,
  wrench: <g><path d="M2 8a5 5 0 0 0 7 4l4 4 3-3-4-4A5 5 0 0 0 5 2l3 4-3 3z" fill="#e4e4e4" stroke="#777" /><path d="M13 12l9 10" stroke="#8a7a3a" strokeWidth="5" /><path d="M13.500 12.500l8 9" stroke="#efd06a" strokeWidth="3.400" /></g>,
  aspect: <g><rect width="24" height="24" fill="#9cc4ee" /><path d="M3 21C0 12 6 3 18 2c6 1 5 7 0 9s-6 3-7 8-6 6-8 2z" fill="#3f9430" stroke="#20571a" /><path d="M5 19c-1-7 4-13 12-14 3 0 3 3 0 5-5 1-7 4-8 7s-3 4-4 2z" fill="#eadf55" /><path d="M7 16c0-5 4-8 9-9 1 1-1 2-3 3-3 1-4 3-6 6z" fill="#d8566c" /></g>,
  search: <g fill="none" stroke="#8f8f8f" strokeWidth="1.900"><circle cx="10" cy="10" r="7" /><path d="M15 15l7 7" /></g>,
  clear: <g><path d="M8 4h16v17H8l-8-8.500z" fill="#9a9a9a" /><path d="M10 8l8 9M18 8l-8 9" stroke="#fff" strokeWidth="2" /></g>,
  epsy: <g><rect x="9" y="9" width="14" height="13" fill={Y} stroke={YD} /><text x="0" y="14" fontSize="22" fontFamily="Liberation Serif, serif" fill="#5a2a6a" fontWeight="700">ε</text></g>,
  invert: <g><path d="M2 2h20v20z" fill="#f3f3f3" stroke="#999" /><path d="M2 2v20h20z" fill={Y} stroke={YD} /></g>,
  totop: <g><rect x="1" y="2" width="22" height="20" fill="#dbe8f6" stroke={B} /><path d="M2 5h20" stroke={B} strokeWidth="2" /><path d="M2 18h20v3H2z" fill={Y} stroke={YD} /><path d="M12 6l6 6h-4v7h-4v-7H6z" fill={BD} /></g>,
  addrow: <g><rect x="2" y="3" width="19" height="16" fill="#fff" stroke="#777" /><path d="M2 6h19M2 11h19M2 15h19M9 3v16M15 3v16" stroke="#777" strokeWidth="1.500" /><Star /></g>,
  form: <g><rect x="2" y="1" width="20" height="22" fill="#dbe9f8" stroke={B} strokeWidth="1.400" /><path d="M4 8h5M4 16h5" stroke="#333" strokeWidth="1.800" /><rect x="11" y="5" width="8" height="5" rx="1" fill="#fff" stroke={B} /><rect x="11" y="14" width="8" height="5" rx="1" fill="#fff" stroke={B} /></g>,
  /* dialog */
  pts: <g fill="#ddd" stroke="#888" strokeWidth="1.300"><circle cx="5" cy="20" r="1.700" /><circle cx="9" cy="9" r="1.700" /><circle cx="20" cy="4" r="1.700" /></g>,
  polyg: <path d="M2 7c1-5 6-3 9-2s7-3 11-2c2 4 1 8 0 12-3 3-8 0-11 1s-6 4-8 2-2-7-1-11z" fill="#dcdcdc" stroke="#858585" strokeWidth="1.500" />,
  loop: <path d="M1 7C3-1 22-1 22.500 10c0 6-5 9-11.500 9v4.500L3 17l8-6v3.500c4 0 6-1.500 6-4.500 0-4-8-5-10-1l3 2H1z" fill="#6cb765" stroke="#2f7a35" strokeWidth="1.200" />,
  /* status bar */
  bug: <g><path d="M3 4q4-5 9 0l7 7q4 6-1 10-6 4-10-2L3 12q-2-5 0-8z" fill="#222" /><path d="M5 5l5 6M9 4l5 6" stroke="#fff" strokeWidth="2" /><circle cx="15" cy="17" r="4" fill="#eee" stroke="#222" strokeWidth="1.500" /><circle cx="15" cy="17" r="1.300" /><path d="M16 6l7-5M1 16l4 6" stroke="#222" strokeDasharray="2 2" strokeWidth="1.500" /></g>,
  lock: <g><path d="M6 12V7q0-5 6-5t6 5v5" fill="none" stroke="#aaa" strokeWidth="2.600" /><rect x="3" y="11" width="18" height="12" rx="2" fill="#4c4c4c" /></g>,
  bubble: <g><ellipse cx="12" cy="11" rx="11.500" ry="10" fill="#545454" /><path d="M15 17l5 7 1-9z" fill="#545454" /><g fill="#fff"><circle cx="7" cy="10" r="1.500" /><circle cx="12" cy="10" r="1.500" /><circle cx="17" cy="10" r="1.500" /></g></g>,
  /* taskbar */
  win: <path d="M1 4l9-1.300V11.500H1zM11.200 2.500L23 .8v10.700H11.200zM1 12.700h9v8.800L1 20.200zM11.200 12.700H23v10.700l-11.800-1.700z" fill="#fff" />,
  cortana: <circle cx="12" cy="12" r="9.500" fill="none" stroke="#fff" strokeWidth="3.200" />,
  taskview: <g fill="none" stroke="#fff" strokeWidth="1.300"><path d="M1.500 1v4h14V1M1.500 23v-4h14v4" /><rect x="1.500" y="7" width="14" height="9" /><path d="M21.500 1v6M21.500 12v11" /><circle cx="21.500" cy="9.500" r="1.500" fill="#fff" /></g>,
  explorer: <g><path d="M1 3h9l2 2h11v15H1z" fill="#f0b83a" /><path d="M1 7h22v13H1z" fill="#fbdf86" /><path d="M4 22v-7h16v7h-4v-3H8v3z" fill="#37a6e6" /></g>,
  chrome: <g><circle cx="12" cy="12" r="11" fill="#fbc117" /><path d="M2.500 6.500A11 11 0 0 1 21.500 6.500L12 7 8 12z" fill="#e33b2e" /><path d="M2.500 6.500A11 11 0 0 0 11 23l5-9-4 2-4-3z" fill="#27a04a" /><circle cx="12" cy="12" r="5" fill="#fff" /><circle cx="12" cy="12" r="4" fill="#3f7ee8" /></g>,
  telegram: <g><circle cx="12" cy="12" r="11" fill="#2d9fdb" /><path d="M4.500 12L18 6.500 16 18l-4-3-2 2.500-.5-4.500z" fill="#fff" /></g>,
  npp: <g><rect x="2" y="2" width="18" height="21" fill="#f2f2f2" stroke="#aaa" /><path d="M2 15q9 4 18-2v10H2z" fill="#76c043" /><path d="M5 6v8h3V8M11 7v6M14 7v6" stroke="#333" fill="none" strokeWidth="1.500" /><path d="M22 1l-7 14" stroke="#e8a02c" strokeWidth="2.600" /></g>,
  vscode: <g><path d="M17 1l6 3v16l-6 3L7 13l-4 3.500L1 15l3.500-3L1 9l2-1.500L7 11zM17 7l-6 5 6 5z" fill="#1f8ad2" fillRule="evenodd" /><path d="M17 1l6 3v16l-6 3z" fill="#2fa4ef" /></g>,
  chev: <path d="M4 16l8-8 8 8" fill="none" stroke="#fff" strokeWidth="1.700" />,
  battery: <g fill="none" stroke="#fff" strokeWidth="1.500"><path d="M2 3v3M6 3v3M1 6h6v3q0 2-3 2t-3-2zM4 11v4" /><rect x="7" y="8" width="15" height="10" fill="#fff" /><path d="M23.500 11v4" /></g>,
  network: <g fill="none" stroke="#fff" strokeWidth="1.500"><path d="M8 4h15v13H5V11M12 17v4M9 21.500h8" /><path d="M1 2v4q0 2 2.500 2T6 6V2zM3.500 8v9" /></g>,
  sound: <g fill="none" stroke="#fff" strokeWidth="1.400"><path d="M2 9h3l5-5v16l-5-5H2z" /><path d="M13 9.500q2 2.500 0 5" /><path d="M16 7q4 5 0 10M19 5q6 7 0 14" stroke="#888" /></g>,
  notif: <g><path d="M2 2h20v17h-6l-4 4-1-4H2z" fill="#fff" /><path d="M6 7h12M6 11h12M6 15h7" stroke="#111" strokeWidth="1.500" /></g>,
};

const Svg = styled.svg`
  display: block;
  flex: none;
  overflow: visible;
  width: ${(p) => p.$s}px;
  height: ${(p) => p.$s}px;
  ${(p) => p.$off && css`filter: grayscale(.75); opacity: .36;`}
`;
const Icon = ({ n, s = 24, off }) => (
  <Svg viewBox="0 0 24 24" $s={s} $off={off}>{ICONS[n]}</Svg>
);

/* ---------- window frame ---------- */
const Shell = styled.div`
  position: relative;
  display: flex;
  flex-direction: column;
  width: 1920px;
  height: 1080px;
  overflow: hidden;
  background: ${BG};
  white-space: nowrap;
`;
const TitleBar = styled.header`
  display: flex;
  align-items: center;
  height: 29px;
  padding: 0 4px 0 1px;
  background: #fff;
  color: #808080;
  font-size: 14px;
`;
const TitleText = styled.span`
  flex: 1;
  padding: 0 0 1px 4px;
  letter-spacing: .1px;
`;
const WinBtn = styled.svg`
  width: 58.500px;
  height: 28px;
  fill: none;
  stroke: #8a8a8a;
`;
const MenuBar = styled.nav`
  display: flex;
  height: 25px;
  padding-left: 11px;
  border-bottom: 1px solid #d2d2d2;
  line-height: 25px;
  color: #989898;
  font-size: 14.200px;
`;
const MenuItem = styled.span`
  width: ${(p) => p.$w}px;
  text-underline-offset: 2px;
`;
const Toolbar = styled.div`
  display: flex;
  align-items: center;
  height: 39px;
  flex: none;
  border-bottom: 1px solid ${LINE};
  background: linear-gradient(#fbfbfb, #eeeeee);
`;
const GripCell = styled.div`
  display: flex;
  justify-content: flex-end;
  flex: none;
  width: ${(p) => p.$w}px;
  padding-right: 4px;
`;
const GripDots = styled.i`
  width: 5px;
  height: 21px;
  background-image: radial-gradient(circle, #bdbdbd 0.8px, transparent 1px);
  background-size: 2.500px 3px;
`;
const Cell = styled.div`
  display: flex;
  align-items: center;
  justify-content: center;
  flex: none;
  width: ${(p) => p.$w || 33}px;
  height: 31px;
`;
const Pressed = styled.div`
  display: flex;
  align-items: center;
  justify-content: center;
  width: 32px;
  height: 31px;
  border: 1px solid #aeaeae;
  border-radius: 3px;
  background: #dcdcdc;
`;
const Caret = styled.i`
  flex: none;
  width: 0;
  height: 0;
  border: ${(p) => p.$s || 4.5}px solid transparent;
  border-top: ${(p) => (p.$s || 4.5) + 0.5}px solid ${(p) => (p.$off ? '#a8a8a8' : '#555')};
  border-bottom: 0;
`;
const CaretUp = styled(Caret)`
  border: 4.5px solid transparent;
  border-bottom: 5px solid #555;
  border-top: 0;
`;
const CaretRight = styled(Caret)`
  border: 5px solid transparent;
  border-left: 5px solid #555;
  border-right: 0;
`;
const CaretLeft = styled(Caret)`
  border: 5px solid transparent;
  border-right: 5px solid #555;
  border-left: 0;
`;
const CornerCell = styled(Cell)`
  align-items: flex-end;
  & > svg { margin-bottom: 3px; }
  & > i { margin: 0 0 2px -9px; }
`;
const Gap = styled.i`
  flex: none;
  width: ${(p) => p.$w}px;
`;
const Push = styled.i`
  flex: 1;
`;

const menus = [['P', 'r', 'ogetto', 73], ['', 'M', 'odifica', 74], ['', 'V', 'isualizza', 80], ['', 'L', 'ayer', 50], ['', 'I', 'mpostazioni', 101], ['', 'P', 'lugins', 62], ['Vett', 'o', 're', 63], ['', 'R', 'aster', 56], ['', 'D', 'atabase', 77], ['', 'W', 'eb', 46.5], ['HCMGIS', '', '', 69.5], ['Pro', 'c', 'essing', 85], ['', 'G', 'uida', 60]];

/* g: grip, v: drop arrow, ! disabled, * pressed, ~ icon with corner arrow */
const bar1 = 'g:14.5 newdoc open save saveas newlayout layouts style g:18.5 *hand pansel zoomin zoomout !zoom11 zoomfull zoomsel zoomlayer zoomlast !zoomnext booknew bookadd book refresh g:17.5 identify !action !v:14.5 select v:15 rows v:16 deselect table abacus *cog sigma ruler v:14 *tips annot v:15 g:18 cw ccw g:18 !arc !v:15 !circ !v:15 !ell !v:15 !rect !v:15 !poly !v:15 g:18.5 copymap pinmap lensdot lensdots netglobe !xy maparea'.split(' ');
const bar2a = 'g:14.5 dsm gpkgnew vnew feathernew chipnew g:18 !~pencils pencil !savep !ptsnew !vtools !v:14 !multi !trash !cut !copy !paste !undo !redo g:18 tag diagram tagpin !tagpin2 !tageye !tagmove !tagrot !tagedit g:19 meta g:18 python shapes previnter prevclip binoc road wave greeninfo g:18 help g:18.5 digit g:18 qms mapbrush g:19 magnet !~snapv !~snapp'.split(' ');
const bar2b = ['topo', '!xcross', '!trace', '!v:14'];

const renderTool = (t, i) => {
  const off = t[0] === '!';
  const s = off ? t.slice(1) : t;
  if (s.startsWith('g:')) return <GripCell key={i} $w={+s.slice(2)}><GripDots /></GripCell>;
  if (s.startsWith('v:')) return <Cell key={i} $w={+s.slice(2)}><Caret $off={off} /></Cell>;
  if (s[0] === '*') return <Cell key={i}><Pressed><Icon n={s.slice(1)} /></Pressed></Cell>;
  if (s[0] === '~') return <CornerCell key={i}><Icon n={s.slice(1)} off={off} /><Caret $off /></CornerCell>;
  return <Cell key={i}><Icon n={s} off={off} /></Cell>;
};

const Spin = styled.div`
  display: flex;
  align-items: center;
  flex: none;
  width: ${(p) => p.$w}px;
  height: ${(p) => p.$h || 24}px;
  border: 1px solid #aaa;
  border-radius: 2px;
  background: ${(p) => p.$bg || '#fff'};
  font: 12.500px ${TAHOMA};
  color: ${(p) => p.$c || '#111'};
  & > span { flex: 1; padding-left: 4px; }
`;
const SpinBtns = styled.div`
  display: flex;
  flex-direction: column;
  align-items: center;
  justify-content: center;
  gap: 5px;
  width: 17px;
  height: 100%;
  border-left: 1px solid #aaa;
  background: #f6f6f6;
`;
const SpinBox = ({ children, ...rest }) => (
  <Spin {...rest}><span>{children}</span><SpinBtns><CaretUp /><Caret /></SpinBtns></Spin>
);
const PxCombo = styled.div`
  display: flex;
  align-items: center;
  flex: none;
  width: 61px;
  height: 23px;
  margin: 0 1px 0 2px;
  padding: 0 9px 0 4px;
  border: 1px solid #b8b8b8;
  border-radius: 3px;
  font: 12.500px ${TAHOMA};
  color: #777;
  & > span { flex: 1; }
`;

/* ---------- workspace ---------- */
const Workspace = styled.main`
  display: flex;
  height: 878px;
  flex: none;
`;
const SideTools = styled.aside`
  display: flex;
  flex-direction: column;
  width: 54px;
  padding-top: 4px;
  border-right: 1px solid ${LINE};
  background: linear-gradient(90deg, #fbfbfb, #eaeaea);
`;
const SideGrip = styled.i`
  align-self: center;
  width: 17px;
  height: 6px;
  margin: 2px 0 2px 4px;
  background-image: radial-gradient(circle, #b5b5b5 0.8px, transparent 1px);
  background-size: 3px 3px;
`;
const SideCell = styled.div`
  display: flex;
  align-items: center;
  gap: 5px;
  height: 32px;
  padding-left: ${(p) => (p.$wide ? 10 : 15)}px;
`;
const LeftDock = styled.section`
  display: flex;
  flex-direction: column;
  width: 285px;
  padding: 0 7px 0 1px;
`;
const DockTitle = styled.div`
  display: flex;
  align-items: center;
  gap: 3px;
  height: ${(p) => p.$h || 21}px;
  padding: 0 2px 0 4px;
  & > span { flex: 1; letter-spacing: -.05px; }
`;
const DockTools = styled.div`
  display: flex;
  align-items: center;
  height: 29px;
  padding: 0 0 3px 3px;
`;
const ToolSlot = styled.div`
  display: flex;
  align-items: center;
  justify-content: center;
  width: ${(p) => p.$w || 25}px;
`;
const Sep = styled.i`
  width: 1px;
  height: 11px;
  margin: 0 3.3px;
  background: #cfcfcf;
`;
const Box = styled.div`
  height: ${(p) => p.$h}px;
  border: 1px solid ${LINE};
  background: #fff;
  overflow: hidden;
`;
const TreeRow = styled.div`
  display: flex;
  align-items: center;
  height: ${(p) => p.$h || 22}px;
  ${(p) => p.$hover && css`background: ${BG};`}
`;
const Arrow = styled.div`
  display: flex;
  justify-content: center;
  width: ${(p) => p.$w}px;
`;
const Label = styled.span`
  padding-left: ${(p) => p.$pl || 6}px;
  letter-spacing: .04px;
`;
const SplitDots = styled.i`
  align-self: center;
  width: 18px;
  height: 7px;
  margin-left: 6px;
  background-image: radial-gradient(circle, #b5b5b5 0.8px, transparent 1px);
  background-size: 3px 7px;
`;
const Check = styled.span`
  display: flex;
  align-items: center;
  justify-content: center;
  flex: none;
  width: 17px;
  height: 17px;
  border: 1px solid #b5b5b5;
  background: ${(p) => (p.$off ? BG : '#fff')};
  & > svg { width: 13px; height: 13px; fill: none; stroke: #000; stroke-width: 2.2; }
`;
const CheckBox = ({ on, off }) => (
  <Check $off={off}>{on && <svg viewBox="0 0 13 13"><path d="M2 7l3.200 4L10.500 1.500" /></svg>}</Check>
);
const LayerRow = styled.div`
  display: flex;
  align-items: center;
  height: 22px;
  padding: 0 3px 0 28px;
  font-weight: 700;
  font-size: 13.800px;
`;
const Symbol = styled.span`
  display: flex;
  justify-content: center;
  width: 32px;
`;
const Dot = styled.i`
  width: 10.500px;
  height: 10.500px;
  border: 1px solid #333;
  border-radius: 50%;
  background: ${(p) => p.$c};
`;
const Swatch = styled.i`
  width: 19px;
  height: 19px;
  margin-left: -1px;
  border: 1px solid #3c4f3c;
  background: #729b6f;
`;
const LayerName = styled.span`
  flex: 1;
  ${(p) => p.$u && css`text-decoration: underline; text-underline-offset: 2px;`}
`;

const FrameBtn = styled.svg`
  width: 11.500px;
  height: 11.500px;
  fill: none;
  stroke: #666;
  stroke-width: 1;
`;
const FrameBtns = () => (
  <>
    <FrameBtn viewBox="0 0 11 11"><rect x=".5" y=".5" width="10" height="10" rx="2" /><path d="M4.500 4.500v-2h4v4h-2M2.500 4.500h4v4h-4z" /></FrameBtn>
    <FrameBtn viewBox="0 0 11 11"><rect x=".5" y=".5" width="10" height="10" rx="2" /><path d="M3 3l5 5M8 3L3 8" strokeWidth="1.900" /></FrameBtn>
  </>
);

const tree = [['star', 'Preferiti', 0], ['home', 'Home', 1], ['folder', 'C:\\', 1], ['folder', 'D:\\', 1], ['folder', 'E:\\', 1], ['gpkg', 'GeoPackage', 1], ['feather', 'SpatiaLite', 1], ['pg', 'PostGIS', 1], ['mssql', 'MSSQL', 0], ['db2', 'DB2', 0], ['globe', 'WMS/WMTS', 1], ['globe', 'XYZ Tiles', 1], ['wcs', 'WCS', 1], ['wfs', 'WFS', 1], ['ows', 'OWS', 1], ['arcmap', 'ArcGisMapServer', 1], ['arcfeat', 'ArcGisFeatureServer', 1], ['geonode', 'GeoNode', 0]];

/* ---------- map ---------- */
const parse = (s) => s.trim().split(/\s+/).map((p) => p.split(',').map(Number));
let seed = 7;
const rnd = () => { seed = (seed * 16807) % 2147483647; return seed / 2147483647 - 0.5; };
const rough = (pts, depth = 2, k = 0.34) => {
  let cur = pts;
  for (let d = 0; d < depth; d += 1) {
    const next = [cur[0]];
    for (let i = 1; i < cur.length; i += 1) {
      const [a, b] = [cur[i - 1], cur[i]];
      const dx = b[0] - a[0];
      const dy = b[1] - a[1];
      const len = Math.hypot(dx, dy);
      if (len > 6 && len < 70) {
        const o = rnd() * k * Math.min(len, 16) / len;
        next.push([(a[0] + b[0]) / 2 - dy * o, (a[1] + b[1]) / 2 + dx * o]);
      }
      next.push(b);
    }
    cur = next;
  }
  return cur.map((p, i) => `${i ? 'L' : 'M'}${p[0].toFixed(1)} ${p[1].toFixed(1)}`).join('');
};
const mainland = rough(parse('132,290 150,283 160,275 165,284 185,282 200,277 215,268 230,267 250,274 258,265 272,260 282,245 285,232 280,220 298,210 308,195 318,190 321,205 320,220 332,235 348,248 362,252 358,262 368,272 372,285 382,292 388,282 383,262 395,250 410,238 414,220 412,200 415,184 425,185 432,192 432,208 445,216 460,213 478,207 492,205 500,222 508,226 508,212 500,200 498,180 505,167 518,162 524,172 538,172 548,180 546,165 538,155 545,150 543,130 555,125 570,124 578,133 608,138 615,120 625,105 640,103 655,98 670,101 690,101 710,94 725,87 738,84 741,90 732,96 738,112 745,120 750,132 765,147 790,150 805,151 820,157 850,159 880,160 900,160 912,164 912,176 900,184 880,198 878,206 890,214 907,220 908,232 893,238 895,250 908,258 904,272 905,284 920,286 934,292 942,308 934,315 922,312 923,300 908,290 900,286 898,296 885,300 870,300 848,310 835,315 810,330 790,342 768,352 762,375 765,402 778,412 790,420 788,432 778,440 772,450 763,445 758,460 765,490 768,515 778,540 795,562 815,578 835,582 860,600 880,615 905,632 918,632 930,645 940,670 955,700 965,730 970,748 980,775 1000,805 1020,822 1040,833 1150,900 1150,1100 1040,1080 1035,1076 1020,1083 1008,1080 1005,1065 995,1045 975,1025 968,1018 950,1020 938,1012 915,1010 895,1010 880,1021 870,1000 860,990 830,985 820,975 800,955 780,945 770,918 745,900 725,893 712,870 700,855 680,842 660,838 643,843 640,828 625,805 610,788 592,778 595,762 582,755 560,755 566,735 564,710 550,680 535,660 532,630 525,600 515,590 500,575 480,570 455,555 440,545 425,535 405,532 385,525 355,520 340,525 320,540 312,560 292,570 288,585 270,605 240,615 212,620 205,610 215,600 232,580 226,565 200,563 175,550 150,545 138,520 130,505 138,490 148,475 156,470 150,445 130,440 125,422 108,408 112,400 135,402 145,390 160,388 170,350 160,345 152,335 150,318 138,310 132,290'), 2, 0.3);
const borders = [
  '160,345 185,338 215,330 240,332 258,325 260,310 253,295 250,274',
  '348,248 345,262 332,280 338,310 345,320 348,340 360,358 355,370 345,378 338,368 326,375 328,395 340,420 365,420 378,440 392,455 405,478',
  '226,565 262,567 272,560 272,545 290,520 292,500 310,508 340,498 365,497 372,480 385,485 405,488 405,478',
  '405,488 435,492 440,508 458,520 465,530 485,545 500,570',
  '405,478 420,470 415,450 420,430 430,412 460,408 485,410 500,408 510,418 535,422 560,438 580,430 612,435 640,430 660,430',
  '548,180 560,190 558,210 552,225 550,250 548,268 555,285 560,298 590,292 580,310 570,325 570,350 582,370 600,378 615,400 640,408 660,430',
  '660,430 685,436 715,422 745,425 762,430 763,445',
  '590,292 595,305 615,313 630,305 635,285 655,265 685,262 690,245 712,240 712,225 698,205 705,182 725,170 728,152 745,158 765,155 770,148',
  '800,152 792,175 775,190 758,213 775,230 768,250 780,275 805,285 835,283 848,310',
  '465,530 470,515 490,510 510,525 530,540 560,560 600,568 630,568 655,555 667,545 680,560 698,562 698,590 710,605 735,615 765,615 775,605',
  '775,605 785,595 790,582 795,592 812,603 820,595 822,582',
  '775,605 775,630 762,640 750,650 745,670 755,690 735,715 730,740 732,765 712,775 715,795 695,815 690,835 680,842',
  '762,640 785,645 800,660 825,665 832,690 845,710 848,740 860,750 885,760 892,775',
  '732,765 735,790 765,798 780,815 808,838 830,820 860,812 885,790 892,775',
  '892,775 910,780 925,765 968,748',
  '910,780 905,795 885,800 880,825 885,845 905,855 908,868 875,870 872,888 895,895 915,915 935,930 960,930 988,940',
  '988,940 1010,935 1015,915 1028,905 1040,910',
  '988,940 995,950 990,980 978,985 978,1005 968,1018',
  '990,980 1010,980 1020,972 1040,975',
].map((s) => rough(parse(s), 3, 0.62)).join('');
const sardinia = rough(parse('294,1050 300,1055 285,1078 290,1090 320,1097 340,1088 355,1080 380,1055 400,1040 405,1030 425,1038 440,1045 445,1065 455,1085 470,1090 475,1120 483,1145 478,1165 462,1185 460,1200 472,1215 468,1260 465,1300 460,1330 455,1365 445,1370 425,1360 405,1355 388,1362 385,1385 372,1400 355,1408 335,1408 325,1385 312,1380 300,1355 308,1335 303,1310 312,1290 310,1265 322,1262 325,1248 306,1245 310,1220 316,1190 308,1165 298,1140 280,1130 275,1110 284,1090 285,1065 294,1050'), 2, 0.45);
const sicily = rough(parse('1037,120 1042,95 1055,82 1070,76 1072,64 1085,85 1110,82 1115,65 1135,60 1145,54 1155,72 1170,72 1185,85 1205,90 1225,82 1250,80 1350,80 1350,235 1230,232 1200,215 1165,200 1130,175 1105,165 1070,162 1045,145 1037,120'), 2, 0.35);
const islets = [[488, 677, 2, 2], [478, 740, 4, 5], [510, 812, 3, 4], [540, 853, 3, 3], [612, 848, 5, 5], [635, 864, 3, 3], [800, 914, 2, 2], [826, 940, 2, 2], [527, 658, 1, 1], [608, 814, 2, 2], [510, 850, 1, 1], [857, 1070, 3, 3], [870, 1070, 4, 3], [882, 1063, 2, 2], [890, 1084, 1, 1], [930, 1088, 4, 3], [1031, 1121, 5, 3], [913, 1425, 3, 3], [293, 1230, 3, 3], [290, 1247, 1, 1], [306, 1411, 2, 2], [379, 268, 3, 3], [425, 1025, 5, 6], [436, 1032, 5, 5], [447, 1048, 6, 4], [455, 1068, 4, 8], [466, 1088, 8, 5], [277, 1133, 4, 5], [282, 1070, 3, 5], [450, 1375, 3, 3], [480, 576, 4, 4], [759, 612, 7, 5], [775, 638, 8, 4]];
const greenIslets = [[523, 784, 8, 5], [543, 779, 10, 6], [990, 1096, 7, 4], [290, 1366, 6, 5], [306, 1383, 5, 12], [790, 588, 3, 6]];
const southIslets = [[985, 100, 4, 4], [1020, 95, 3, 3], [1018, 107, 5, 3], [1032, 97, 2, 2], [1037, 115, 3, 7], [1103, 440, 3, 3], [1033, 493, 1.5, 1.5], [1064, 497, 5, 3], [1072, 499, 4, 3]];
const points = [[465, 234], [482, 259], [553, 238], [611, 197], [680, 209], [645, 231], [610, 303], [554, 316], [616, 359], [696, 361], [664, 380], [723, 415], [667, 432], [531, 542], [743, 674]];

const MapBox = styled.div`
  height: 663px;
  border: 1px solid ${LINE};
  background: #fff;
`;
const MapSvg = styled.svg`
  display: block;
  width: 1136px;
  height: 661px;
`;
const MapCanvas = () => (
  <MapBox>
    <MapSvg viewBox="340 133 1136 661">
      <g transform="translate(400 130) scale(.33333 .33804)" fill="#729b6f" stroke="#232323" strokeWidth="3.200" strokeLinejoin="round">
        <path d={mainland} />
        <path d={borders} fill="none" strokeWidth="3.600" />
        <path d={sardinia} />
        {greenIslets.map(([x, y, a, b]) => <ellipse key={`${x}-${y}`} cx={x} cy={y} rx={a} ry={b} />)}
        {islets.map(([x, y, a, b]) => <ellipse key={`${x}-${y}`} cx={x} cy={y} rx={a} ry={b} fill="#232323" stroke="none" />)}
      </g>
      <g transform="translate(330 620) scale(.33333)" fill="#729b6f" stroke="#232323" strokeWidth="3.200" strokeLinejoin="round">
        <path d={sicily} />
        <path d="M974 288q4-5 10 0 8 4 8 10-4 5-10 2-7-4-8-12z" />
        {southIslets.map(([x, y, a, b]) => <ellipse key={`${x}-${y}`} cx={x} cy={y} rx={a} ry={b} fill="#232323" stroke="none" />)}
      </g>
      {points.map(([x, y]) => <circle key={`${x}-${y}`} cx={x} cy={y} r="4.800" fill="#f00" stroke="#3a2020" />)}
    </MapSvg>
  </MapBox>
);

const Center = styled.section`
  display: flex;
  flex-direction: column;
  width: 1138px;
`;
const AttrTitle = styled.div`
  height: 32px;
  padding: 8px 0 0 4px;
  font-size: 14.200px;
`;
const AttrTools = styled.div`
  display: flex;
  align-items: center;
  height: 25px;
  padding: 0 0 7px 2.500px;
`;
const Table = styled.div`
  display: flex;
  height: 128px;
  border: 1px solid ${LINE};
  background: #fff;
  overflow: hidden;
`;
const TableCols = styled.div`
  flex: 1;
`;
const TableHead = styled.div`
  display: flex;
  height: 24px;
  background: ${BG};
`;
const HeadCell = styled.div`
  display: flex;
  align-items: center;
  width: 147px;
  border-bottom: 1px solid ${LINE};
  background: linear-gradient(#fcfcfc, #ececec);
  & > span { width: 133px; padding: 1px 0 0 19px; text-align: center; }
`;
const TableRow = styled.div`
  display: flex;
  width: 147px;
  height: 37px;
  line-height: 37px;
  border-bottom: 1px solid #c4c4c4;
`;
const RowNum = styled.div`
  width: 22px;
  padding-left: 2px;
  border-right: 1px solid ${LINE};
  background: linear-gradient(90deg, #fafafa, #ececec);
`;
const RowVal = styled.div`
  flex: 1;
  padding-right: 3px;
  border-right: 1px solid #c4c4c4;
  text-align: right;
  background: ${(p) => (p.$alt ? '#e8e7e3' : '#fff')};
`;
const TableScroll = styled.div`
  width: 17px;
  border-left: 1px solid ${LINE};
  background: #f4f4f4;
`;
const AttrFoot = styled.div`
  display: flex;
  align-items: center;
  height: 30px;
  padding: 0 3px 3px 3px;
  gap: 7px;
`;
const FilterBtn = styled.div`
  display: flex;
  align-items: center;
  width: 175px;
  height: 27px;
  margin-right: auto;
  padding-left: 5px;
  border: 1px solid #a8a8a8;
  border-radius: 3px;
  background: linear-gradient(#fff, #f0f0f0);
  font: 12.500px ${TAHOMA};
  letter-spacing: -.05px;
  & > span { width: 143px; padding-left: 5px; }
  & > i { margin: 13px 0 0 -2px; }
`;
const ViewBtn = styled(Pressed)`
  width: 27px;
  height: 27px;
`;

/* ---------- processing dock ---------- */
const RightDock = styled.section`
  display: flex;
  flex-direction: column;
  width: 443px;
  padding: 0 1px 0 7px;
`;
const SearchBox = styled.div`
  display: flex;
  align-items: center;
  height: 24px;
  border: 1px solid #a8a8a8;
  border-radius: 3px;
  background: #fff;
  padding: 0 7px 0 8px;
  font: 12.500px ${TAHOMA};
  & > span { flex: 1; padding-left: 7px; }
`;
const Tail = styled.span`
  width: ${(p) => p.$w}px;
  text-align: right;
`;
const tails = [[''], ['e', 208.7], ['zione', 237], ['re', 214.5], [''], ['rica', 224], [''], ['stensione', 262.5], [''], ['', 0, 21], [''], [''], ['', 0, 21], [''], ['pect)', 238], ['one Topografica (TPI)', 345]];

/* ---------- dialog ---------- */
const Dialog = styled.div`
  position: absolute;
  left: 746px;
  top: 328px;
  width: 942px;
  height: 647px;
  border: 1px solid #6e6e6e;
  background: ${BG};
  box-shadow: 0 7px 20px rgba(0, 0, 0, .32), 0 0 6px rgba(0, 0, 0, .14);
  font: 12.500px ${TAHOMA};
  letter-spacing: .09px;
`;
const DlgTitle = styled.div`
  display: flex;
  align-items: center;
  height: 37px;
  padding: 0 15px 0 9px;
  background: #fff;
  font: 14px ${UI};
  & > span { flex: 1; padding-left: 5px; }
`;
const DlgMain = styled.div`
  display: flex;
  height: 508px;
  padding: 13px 13px 0;
`;
const DlgLeft = styled.div`
  width: 642px;
`;
const Tabs = styled.div`
  display: flex;
  align-items: flex-end;
  height: 30px;
`;
const Tab = styled.div`
  width: ${(p) => (p.$on ? 87 : 49)}px;
  height: ${(p) => (p.$on ? 30 : 28)}px;
  line-height: ${(p) => (p.$on ? 30 : 29)}px;
  border: 1px solid ${LINE};
  border-bottom: ${(p) => (p.$on ? '0' : `1px solid ${LINE}`)};
  ${(p) => !p.$on && css`border-left: 0;`}
  border-radius: 3px 3px 0 0;
  background: ${(p) => (p.$on ? 'linear-gradient(#fff, #fbfbfb 80%, #efefef)' : '#e7e7e7')};
  text-align: center;
`;
const TabRest = styled.i`
  flex: 1;
  height: 1px;
  background: #a8a8a8;
`;
const Pane = styled.div`
  display: flex;
  height: 464px;
  border: 1px solid ${LINE};
  border-top: 0;
  overflow: hidden;
  box-shadow: inset 1px 0 #fff;
`;
const Form = styled.div`
  flex: 1;
  padding: 0 3px 0 5px;
`;
const FLabel = styled.div`
  display: flex;
  align-items: center;
  height: ${(p) => p.$h}px;
  padding: ${(p) => p.$pt || 0}px 0 2px;
`;
const FRow = styled.div`
  display: flex;
  gap: 6px;
`;
const Combo = styled.div`
  display: flex;
  align-items: center;
  flex: none;
  width: ${(p) => p.$w}px;
  height: ${(p) => p.$h}px;
  padding: 0 9px 0 4px;
  border: 1px solid #a8a8a8;
  border-radius: 3px;
  background: linear-gradient(#fff, #eeeeee);
  & > span { flex: 1; padding-left: ${(p) => p.$pl || 0}px; }
`;
const Field = styled.div`
  flex: none;
  width: 580px;
  height: 24px;
  padding-left: 2px;
  line-height: 23px;
  border: 1px solid #a8a8a8;
  border-radius: 2px;
  color: #808080;
`;
const Btn = styled.div`
  display: flex;
  align-items: center;
  justify-content: center;
  flex: none;
  width: ${(p) => p.$w}px;
  height: ${(p) => p.$h || 26}px;
  padding-bottom: 1px;
  border: 1px solid ${(p) => (p.$focus ? '#4a90e2' : '#a8a8a8')};
  border-radius: 3px;
  background: ${(p) => (p.$focus ? 'linear-gradient(#fdfdfe, #e4ebf5)' : 'linear-gradient(#fff, #f0f0f0)')};
  ${(p) => p.$off && css`color: #8a8a8a; border-color: #c0c0c0;`}
`;
const CheckRow = styled.div`
  display: flex;
  align-items: center;
  height: ${(p) => p.$h}px;
  padding-top: ${(p) => p.$pt || 0}px;
  gap: 6px;
  ${(p) => p.$off && css`color: #858585;`}
  & > b { padding-top: 1px; font-weight: 400; }
`;
const CheckGrid = styled.div`
  display: grid;
  grid-template-columns: 88px 120px;
`;
const ScrollBar = styled.div`
  display: flex;
  flex-direction: column;
  width: 18px;
  border-left: 1px solid ${LINE};
`;
const ScrollBtn = styled.div`
  display: flex;
  align-items: center;
  justify-content: center;
  height: 17px;
  background: #fafafa;
`;
const Thumb = styled.div`
  height: 297px;
  border-top: 1px solid ${LINE};
  border-bottom: 1px solid ${LINE};
  background: linear-gradient(90deg, #fff, #f0f0f0);
`;
const Groove = styled.div`
  flex: 1;
  border-bottom: 1px solid ${LINE};
  background: #e4e4e4;
`;
const Splitter = styled.div`
  display: flex;
  flex-direction: column;
  align-items: center;
  width: 17px;
  & > i:first-child { margin: 1px 4px 0 0; }
`;
const VDots = styled.i`
  width: 2px;
  height: 17px;
  margin-top: 230px;
  background-image: radial-gradient(circle, #a8a8a8 0.8px, transparent 1px);
  background-size: 2px 3px;
`;
const Help = styled.div`
  width: 256px;
  height: 495px;
  padding: 6px 3.500px;
  border: 1px solid ${LINE};
  background: #fff;
  color: #6c6c6c;
  line-height: 16px;
  font-size: 12.300px;
  letter-spacing: .14px;
  white-space: pre;
  & > p { margin: 0 0 12px; }
`;
const HelpTitle = styled.h3`
  margin: 0 0 11px;
  color: #4f4f4f;
  font: 700 19.600px/24px ${TAHOMA};
`;
const DlgFoot = styled.div`
  display: flex;
  flex-direction: column;
  gap: 7px;
  padding: 30px 13px 0;
`;
const FootRow = styled.div`
  display: flex;
  gap: 7px;
  align-items: center;
  height: 25px;
`;
const Progress = styled.div`
  width: 827px;
  height: 25px;
  border: 1px solid #a8a8a8;
  border-radius: 2px;
  background: #fff;
  text-align: center;
  line-height: 23px;
`;

/* ---------- status + taskbar ---------- */
const StatusBar = styled.footer`
  display: flex;
  align-items: center;
  height: 32px;
  flex: none;
  padding: 0 0 0 4px;
  font: 12.500px ${TAHOMA};
  letter-spacing: .05px;
`;
const Locator = styled.div`
  display: flex;
  align-items: center;
  gap: 8px;
  width: 309px;
  height: 25px;
  margin-right: 599px;
  padding-left: 8px;
  border: 1px solid #a8a8a8;
  border-radius: 3px;
  background: #fff;
  color: #7d7d7d;
`;
const SText = styled.span`
  width: ${(p) => p.$w}px;
  padding-top: 1px;
`;
const SBox = styled.div`
  display: flex;
  align-items: center;
  justify-content: ${(p) => (p.$drop ? 'space-between' : 'center')};
  width: ${(p) => p.$w}px;
  height: 24px;
  padding: ${(p) => (p.$drop ? '0 9px 0 3px' : '0')};
  border: 1px solid #a8a8a8;
  border-radius: 2px;
  background: #fff;
`;
const TaskBar = styled.footer`
  display: flex;
  height: 38px;
  flex: none;
  background: #060606;
  color: #fff;
`;
const TaskItem = styled.div`
  display: flex;
  align-items: center;
  justify-content: center;
  width: ${(p) => p.$w}px;
  margin-right: ${(p) => p.$mr || 0}px;
  ${(p) => p.$run && css`box-shadow: inset 0 -3px #b4b4b4;`}
  ${(p) => p.$active && css`background: #454545;`}
`;
const Clock = styled.span`
  width: 50px;
  line-height: 38px;
  text-align: center;
  font-size: 14px;
  letter-spacing: -.1px;
`;
const Edge = styled.i`
  width: 1px;
  margin: 0 5px 0 4px;
  background: #555;
`;

/* ---------- annotations ---------- */
const BadgeDot = styled.div`
  position: absolute;
  left: ${(p) => p.$x - 19.5}px;
  top: ${(p) => p.$y - 19.5}px;
  width: 39px;
  height: 39px;
  border-radius: 50%;
  background: #d96345;
  color: #fff;
  font: 700 24px/37px "Liberation Sans", Arial, sans-serif;
  text-align: center;
  box-shadow: 1px 1px 2px rgba(0, 0, 0, .18);
`;
const FlowArrow = styled.svg`
  position: absolute;
  left: 0;
  top: 0;
  width: 1920px;
  height: 1080px;
`;
const badges = [[1616, 192], [1759, 302], [1043, 349], [953, 452], [962, 535], [1149, 813], [1400, 940]];

const sideIcons = ['cad', 'mvpts+', 'rotf', 'simp', 'ring', 'part', 'fillring', 'delring', 'delpart', 'reshape', 'offset', 'vref', 'split', 'split', 'merge', 'mergeattr', 'rotsym+'];
const attrA = ['pencil', '!multi', '!savep', 'refresh'];
const attrB = ['!addrow', '!trash', '!cut', '!copy', '!paste'];
const attrC = ['epsy', 'rows', 'invert', 'deselect', 'funnel', 'totop', 'pansel'];
const slot = (s, i) => {
  const off = s[0] === '!';
  return <ToolSlot key={i}><Icon n={off ? s.slice(1) : s} s={15} off={off} /></ToolSlot>;
};

const predicates = [['interseca', 1], ['sovrappone'], ['contiene'], ['contenuto in'], ['uguale'], ['attraversa'], ['tocca']];

const InputRow = ({ icon, text }) => (
  <>
    <FRow>
      <Combo $w={546} $h={28} $pl={4}><Icon n={icon} s={20} /><span>{text}</span><Caret $s={5} /></Combo>
      <Btn $w={27} $h={23}>...</Btn>
      <Btn $w={28} $h={27}><Icon n="loop" s={13} /></Btn>
    </FRow>
    <CheckRow $h={30} $pt={3} $off><CheckBox off /><b>Solo elementi selezionati</b></CheckRow>
  </>
);

export default function App() {
  return (
    <>
      <Global />
      <Shell>
        <TitleBar>
          <Icon n="qgis" s={21} />
          <TitleText>*Progetto Senza Titolo - QGIS</TitleText>
          <WinBtn viewBox="0 0 58 28"><path d="M24 14.500h12" /></WinBtn>
          <WinBtn viewBox="0 0 58 28"><path d="M24.500 10.500h9v9h-9zM27 10V8.500h9v9h-2" /></WinBtn>
          <WinBtn viewBox="0 0 58 28"><path d="M23.500 8.500l12 12M35.500 8.500l-12 12" /></WinBtn>
        </TitleBar>
        <MenuBar>
          {menus.map(([a, u, b, w]) => <MenuItem key={a + u + b} $w={w}>{a}<u>{u}</u>{b}</MenuItem>)}
        </MenuBar>
        <Toolbar>{bar1.map(renderTool)}</Toolbar>
        <Toolbar>
          {bar2a.map(renderTool)}
          <SpinBox $w={91} $h={23} $bg={BG} $c="#777">12</SpinBox>
          <PxCombo><span>px</span><Caret $off /></PxCombo>
          {bar2b.map(renderTool)}
        </Toolbar>

        <Workspace>
          <SideTools>
            <SideGrip />
            {sideIcons.map((s, i) => {
              const drop = s.endsWith('+');
              return <SideCell key={i} $wide={drop}><Icon n={s.replace('+', '')} s={23} off />{drop && <Caret $off />}</SideCell>;
            })}
          </SideTools>

          <LeftDock>
            <DockTitle><span>Browser</span><FrameBtns /></DockTitle>
            <DockTools>
              {['addlayer', 'refresh', 'funnel', 'treeup', 'info'].map((n) => <ToolSlot key={n}><Icon n={n} s={15} /></ToolSlot>)}
            </DockTools>
            <Box $h={450}>
              {tree.map(([ic, t, a]) => (
                <TreeRow key={t}><Arrow $w={25}>{a ? <CaretRight /> : null}</Arrow><Gap $w={3} /><Icon n={ic} s={20} /><Label>{t}</Label></TreeRow>
              ))}
            </Box>
            <SplitDots />
            <DockTitle $h={20}><span>Layer</span><FrameBtns /></DockTitle>
            <DockTools>
              {['brush', 'addgroup', 'eye', 'funnel'].map((n) => <ToolSlot key={n}><Icon n={n} s={15} /></ToolSlot>)}
              <ToolSlot><Icon n="eps" s={15} off /></ToolSlot>
              <ToolSlot $w={14}><Caret $off /></ToolSlot>
              {['treedown', 'treeup', 'dellayer'].map((n) => <ToolSlot key={n}><Icon n={n} s={15} /></ToolSlot>)}
            </DockTools>
            <Box $h={322}>
              <LayerRow><CheckBox on /><Symbol><Dot $c="#f00" /></Symbol><LayerName>Punto</LayerName><Icon n="memchip" s={17} /></LayerRow>
              <LayerRow><CheckBox on /><Symbol><Dot $c="#e3b23c" /></Symbol><LayerName $u>Vettore unito</LayerName><Icon n="memchip" s={17} /></LayerRow>
              <LayerRow><CheckBox on /><Symbol><Swatch /></Symbol><LayerName>regioni_g</LayerName></LayerRow>
            </Box>
          </LeftDock>

          <Center>
            <MapCanvas />
            <AttrTitle>Punto :: Totale degli elementi: 20, Filtrati: 20, Selezionati: 0</AttrTitle>
            <AttrTools>
              {attrA.map(slot)}<Sep />{attrB.map(slot)}<Sep />{attrC.map(slot)}
            </AttrTools>
            <Table>
              <TableCols>
                <TableHead><HeadCell><span>fid</span><CaretUp /></HeadCell></TableHead>
                {[1, 2, 3].map((n) => <TableRow key={n}><RowNum>{n}</RowNum><RowVal $alt={n === 2}>{n}</RowVal></TableRow>)}
              </TableCols>
              <TableScroll />
            </Table>
            <AttrFoot>
              <FilterBtn><Icon n="funnel" s={18} /><span>Mostra tutti gli elementi</span><Caret /></FilterBtn>
              <Icon n="form" s={17} />
              <ViewBtn><Icon n="table" s={17} /></ViewBtn>
            </AttrFoot>
          </Center>

          <RightDock>
            <DockTitle><span>Strumenti di Processing</span><FrameBtns /></DockTitle>
            <DockTools>
              {['gears', 'pydrop', 'clock', 'doc'].map((n) => <ToolSlot key={n}><Icon n={n} s={16} /></ToolSlot>)}
              <Sep /><ToolSlot><Icon n="editnote" s={16} /></ToolSlot><Sep /><ToolSlot><Icon n="wrench" s={16} /></ToolSlot>
            </DockTools>
            <SearchBox><Icon n="search" s={13} /><span>posizione</span><Icon n="clear" s={13} /></SearchBox>
            <Box $h={804}>
              <TreeRow><Arrow $w={24}><CaretRight /></Arrow><Gap $w={4} /><Icon n="clock" s={20} /><Label>Usati di recente</Label></TreeRow>
              <TreeRow><Arrow $w={24}><Caret $s={5} /></Arrow><Gap $w={5} /><Icon n="qgis" s={18} /><Label $pl={7}>Analisi geomorfologica</Label></TreeRow>
              <TreeRow><Gap $w={53} /><Icon n="aspect" s={20} /><Label>Esposizione (aspect)</Label></TreeRow>
              <TreeRow><Arrow $w={24}><Caret $s={5} /></Arrow><Gap $w={5} /><Icon n="qgis" s={18} /><Label $pl={7}>Generale vettore</Label></TreeRow>
              <TreeRow $hover><Gap $w={53} /><Icon n="cogb" s={20} /><Label>Unisci attributi per posizione</Label></TreeRow>
              <TreeRow><Gap $w={53} /><Icon n="sigmablue" s={20} /><Label>Unisci attributi per posizione (riassunto)</Label></TreeRow>
              {tails.map(([t, w, h], i) => <TreeRow key={i} $h={h}>{t && <Tail $w={w}>{t}</Tail>}</TreeRow>)}
            </Box>
          </RightDock>
        </Workspace>

        <StatusBar>
          <Locator><Icon n="search" s={13} />Digita per localizzare (Ctrl+K)</Locator>
          <SText $w={65}>Coordinate</SText>
          <SBox $w={112}>929130,4134649</SBox>
          <Gap $w={4} /><Icon n="bug" s={20} /><Gap $w={14} />
          <SText $w={34}>Scala</SText>
          <SBox $w={92} $drop>1:9654391<Caret /></SBox>
          <Gap $w={12} /><Icon n="lock" s={18} /><Gap $w={7} />
          <SText $w={130}>Lente d'ingrandimento</SText>
          <SpinBox $w={93}>100%</SpinBox>
          <Gap $w={9} /><SText $w={65}>Rotazione</SText>
          <SpinBox $w={88}>0,0 º</SpinBox>
          <Gap $w={7} /><CheckBox on /><Gap $w={6} />
          <SText $w={73}>Visualizza</SText>
          <Icon n="netglobe" s={19} /><Gap $w={4} />
          <SText $w={91}>EPSG:32632</SText>
          <Icon n="bubble" s={20} />
        </StatusBar>

        <TaskBar>
          <TaskItem $w={44}><Icon n="win" s={20} /></TaskItem>
          <TaskItem $w={46}><Icon n="cortana" s={21} /></TaskItem>
          <TaskItem $w={44} $mr={10}><Icon n="taskview" s={20} /></TaskItem>
          {['explorer', 'chrome', 'telegram', 'npp', 'vscode'].map((n, i) => (
            <TaskItem key={n} $w={35} $mr={i === 4 ? 6 : 11} $run><Icon n={n} s={20} /></TaskItem>
          ))}
          <TaskItem $w={45} $run $active><Icon n="qgis" s={20} /></TaskItem>
          <Push />
          <TaskItem $w={30}><Icon n="chev" s={19} /></TaskItem>
          <TaskItem $w={30}><Icon n="battery" s={20} /></TaskItem>
          <TaskItem $w={30}><Icon n="network" s={20} /></TaskItem>
          <TaskItem $w={30}><Icon n="sound" s={20} /></TaskItem>
          <Clock>11:00</Clock>
          <TaskItem $w={52}><Icon n="notif" s={22} /></TaskItem>
          <Edge />
        </TaskBar>

        <Dialog>
          <DlgTitle>
            <Icon n="qgis" s={20} /><span>Unisci attributi per posizione</span>
            <svg width="12" height="12" viewBox="0 0 12 12"><path d="M.5.5l11 11M11.500.5l-11 11" stroke="#000" strokeWidth="1.100" /></svg>
          </DlgTitle>
          <DlgMain>
            <DlgLeft>
              <Tabs><Tab $on>Parametri</Tab><Tab>Log</Tab><TabRest /></Tabs>
              <Pane>
                <Form>
                  <FLabel $h={28}>Layer in ingresso</FLabel>
                  <InputRow icon="pts" text="Punto [EPSG:32632]" />
                  <FLabel $h={28}>Vettore di join</FLabel>
                  <InputRow icon="polyg" text="regioni_g [EPSG:32632]" />
                  <FLabel $h={24} $pt={4}>Predicato geometrico</FLabel>
                  <CheckGrid>
                    {predicates.map(([t, on]) => <CheckRow key={t} $h={29}><CheckBox on={on} /><b>{t}</b></CheckRow>)}
                  </CheckGrid>
                  <FLabel $h={27}>Campi da aggiungere (lascia vuoto per utilizzare tutti i campi) [optional]</FLabel>
                  <FRow><Field>0 elementi selezionati</Field><Btn $w={27} $h={24}>...</Btn></FRow>
                  <FLabel $h={30}>Tipo di unione</FLabel>
                  <Combo $w={613} $h={24}><span>Take attributes of the first located feature only (one-to-one)</span><Caret $s={5} /></Combo>
                  <CheckRow $h={36}><CheckBox /><b>Scarta i record che non possono essere uniti</b></CheckRow>
                  <FLabel $h={18}>Joined field prefix [opzionale]</FLabel>
                </Form>
                <ScrollBar>
                  <ScrollBtn><CaretUp /></ScrollBtn><Thumb /><Groove /><ScrollBtn><Caret /></ScrollBtn>
                </ScrollBar>
              </Pane>
            </DlgLeft>
            <Splitter><CaretLeft /><VDots /></Splitter>
            <Help>
              <HelpTitle>{'Unisci attributi per\nposizione'}</HelpTitle>
              <p>{'This algorithm takes an input vector layer\nand creates a new vector layer that is an\nextended version of the input one, with\nadditional attributes in its attribute table.'}</p>
              <p>{'The additional attributes and their values\nare taken from a second vector layer. A\nspatial criteria is applied to select the\nvalues from the second layer that are\nadded to each feature from the first layer\nin the resulting one.'}</p>
            </Help>
          </DlgMain>
          <DlgFoot>
            <FootRow><Progress>0%</Progress><Btn $w={80} $off>Annulla</Btn></FootRow>
            <FootRow>
              <Btn $w={194}>Esegui come processo in serie...</Btn><Push />
              <Btn $w={80}>Esegui</Btn><Btn $w={80} $focus>Chiudi</Btn><Btn $w={80}>Aiuto</Btn>
            </FootRow>
          </DlgFoot>
        </Dialog>

        <FlowArrow viewBox="0 0 1920 1080">
          <path d="M270 724C620 742 965 941 1318 948" fill="none" stroke="#ed1c24" strokeWidth="1.900" />
          <path d="M255 723.800L275.500 718l-4 6.200 3.500 7z" fill="#ed1c24" />
          <circle cx="1318" cy="948" r="6" fill="#ed1c24" />
        </FlowArrow>
        {badges.map(([x, y], i) => <BadgeDot key={x} $x={x} $y={y}>{i + 1}</BadgeDot>)}
      </Shell>
    </>
  );
}
